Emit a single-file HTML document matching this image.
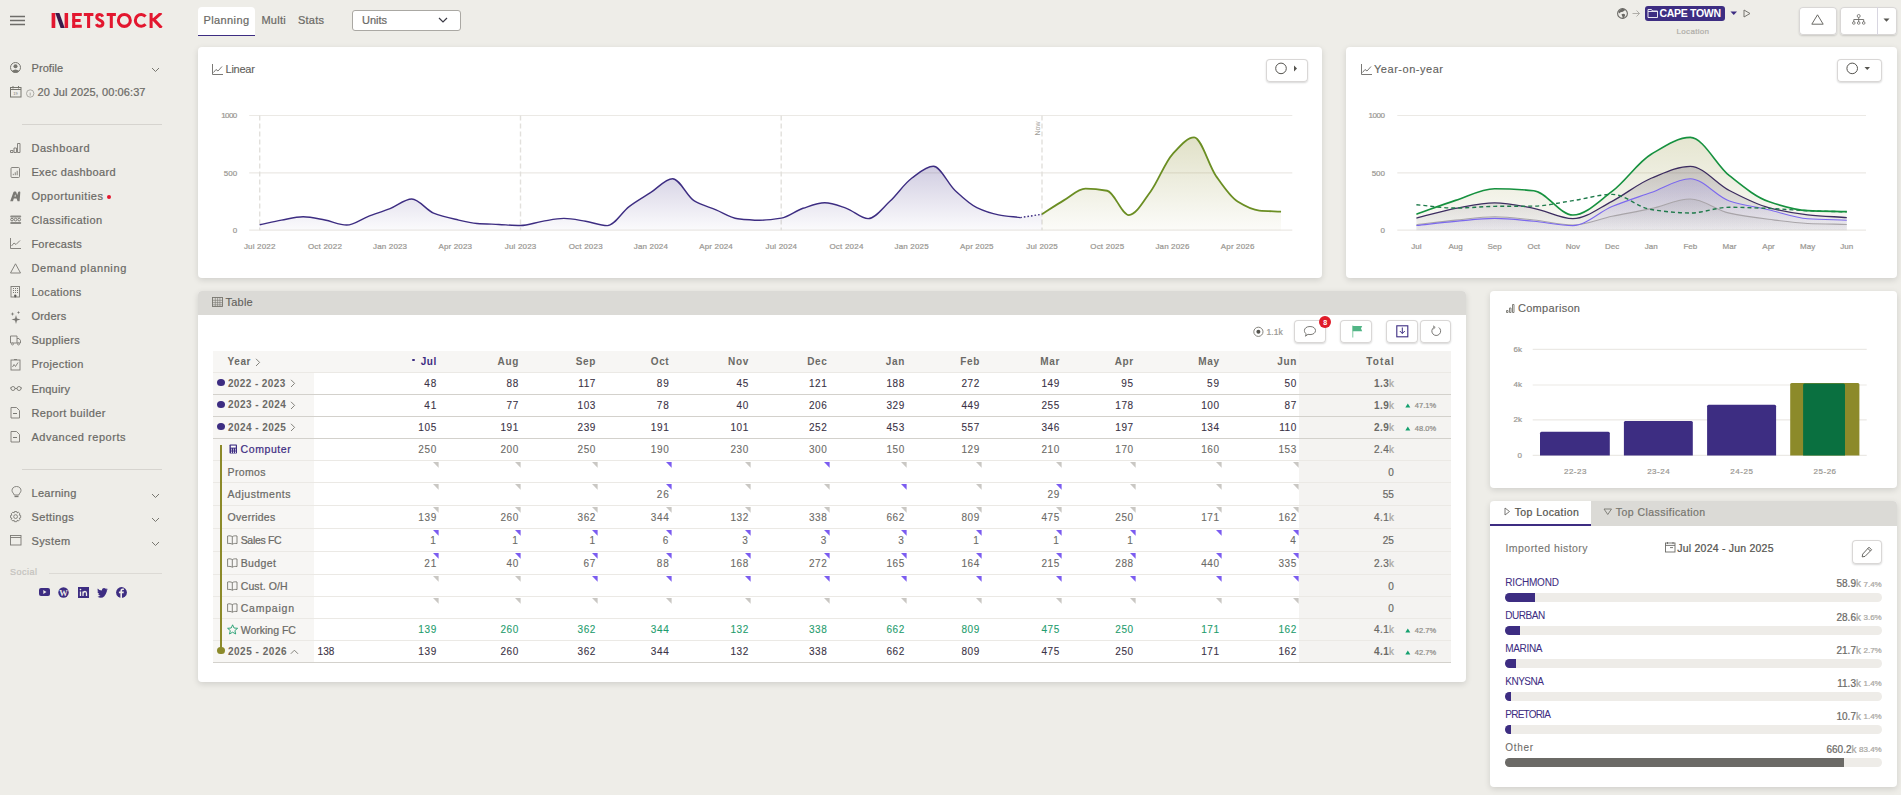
<!DOCTYPE html>
<html><head><meta charset="utf-8"><style>
html,body{margin:0;padding:0;}
body{width:1901px;height:795px;overflow:hidden;background:#eeede8;position:relative;font-family:"Liberation Sans",sans-serif;}
.t{position:absolute;white-space:nowrap;line-height:1;}
.r{position:absolute;}
.i{position:absolute;overflow:visible;}
.card{position:absolute;background:#fff;border-radius:4px;box-shadow:0 2px 6px rgba(0,0,0,0.13);}
.btn{background:#fff;border-radius:4px;box-shadow:inset 0 0 0 1px #d9d7d6,0 1px 2px rgba(0,0,0,0.16);}
</style></head><body>
<svg class="i" style="left:10px;top:14px;" width="16" height="12" viewBox="0 0 16 12"><path d="M0 2.5H15M0 6.5H15M0 10.5H15" stroke="#6e6d69" stroke-width="1.3"/></svg><svg class="i" style="left:0;top:0" width="170" height="35" viewBox="0 0 170 35"><defs><clipPath id="lc"><rect x="0" y="12.9" width="170" height="15"/></clipPath></defs><path clip-path="url(#lc)" d="M73.75 12.9V27.9 M72.1 14.55H81.8 M72.1 20.4H80.6 M72.1 26.25H81.8 M83.8 14.55H93.4 M88.6 14.55V27.9 M106.7 14.55H115.9 M111.3 14.55V27.9 M151.1 12.9V27.9 M161.3 12.9 L152.6 20.6 M153.6 19.4 L161.5 27.9" stroke="#e3172f" stroke-width="3.05" fill="none"/><path d="M102.8 16.6 C102.1 15.3 101.1 14.55 99.8 14.55 C97.9 14.55 96.8 15.7 96.8 17.2 C96.8 20.4 102.9 19.8 102.9 23.3 C102.9 25.1 101.5 26.25 99.7 26.25 C98.1 26.25 96.9 25.4 96.3 24.1" stroke="#e3172f" stroke-width="3.05" fill="none"/><circle cx="124.35" cy="20.4" r="5.97" stroke="#e3172f" stroke-width="3.05" fill="none"/><path d="M145.55 16.49 A5.85 5.85 0 1 0 145.55 24.31" stroke="#e3172f" stroke-width="3.05" fill="none"/><path d="M51.6 12.9H55.3V27.9H51.6Z M64.6 12.9H68.1V27.9H64.6Z" fill="#e3172f"/><path d="M55.3 12.9 L59.4 12.9 L64.7 27.9 L60.6 27.9Z" fill="#3b1a4a"/></svg><svg class="i" style="left:10px;top:62px;" width="12" height="12" viewBox="0 0 12 12"><circle cx="5.5" cy="5.5" r="5" fill="none" stroke="#77766f" stroke-width="1"/><circle cx="5.5" cy="4.2" r="2" fill="#77766f"/><path d="M1.8 9 Q5.5 5.8 9.2 9 L8 10.3 Q5.5 11 3 10.3Z" fill="#77766f"/></svg><div class="t" style="left:31.50px;top:62.89px;font-size:11px;color:#6b6a66;letter-spacing:0.070px;-webkit-text-stroke-width:0.22px;">Profile</div><svg class="i" style="left:151px;top:67px;" width="9" height="6" viewBox="0 0 9 6"><path d="M1 1 L4.5 4.5 L8 1" fill="none" stroke="#77766f" stroke-width="1"/></svg><svg class="i" style="left:10px;top:86px;" width="12" height="12" viewBox="0 0 12 12"><rect x="0.5" y="1.5" width="10.5" height="9.5" fill="none" stroke="#77766f" stroke-width="1"/><path d="M0.5 3.5H11M3 0V2.5M8.5 0V2.5" stroke="#77766f" stroke-width="1"/><text x="3.2" y="8.8" font-size="4" fill="#77766f" font-family="Liberation Sans">19</text></svg><svg class="i" style="left:26px;top:89px;" width="9" height="9" viewBox="0 0 9 9"><circle cx="4.2" cy="4.5" r="3.7" fill="none" stroke="#9a9994" stroke-width="0.8"/><path d="M4.2 3.6V6.6" stroke="#9a9994" stroke-width="0.8"/></svg><div class="t" style="left:37.60px;top:86.69px;font-size:11px;color:#6b6a66;letter-spacing:0.104px;-webkit-text-stroke-width:0.22px;">20 Jul 2025, 00:06:37</div><div class="r" style="left:22px;top:123.5px;width:140px;height:1px;background:#d6d4cf"></div><div class="t" style="left:31.40px;top:142.99px;font-size:11px;color:#6b6a66;letter-spacing:0.548px;-webkit-text-stroke-width:0.22px;">Dashboard</div><svg class="i" style="left:10px;top:142.6px;" width="13" height="13" viewBox="0 0 13 13"><path d="M0.5 9.5H3V7.5H0.5ZM4 9.5H6.5V5H4ZM7.5 9.5H10V0.5H7.5Z" fill="none" stroke="#7a7974" stroke-width="0.9"/></svg><div class="t" style="left:31.40px;top:166.99px;font-size:11px;color:#6b6a66;letter-spacing:0.362px;-webkit-text-stroke-width:0.22px;">Exec dashboard</div><svg class="i" style="left:10px;top:166.6px;" width="13" height="13" viewBox="0 0 13 13"><rect x="1" y="0.5" width="8.5" height="10" rx="1" fill="none" stroke="#7a7974" stroke-width="0.9"/><path d="M3.3 8.2V6.8M5.25 8.2V5.3M7.2 8.2V3.8" stroke="#7a7974" stroke-width="0.9"/></svg><div class="t" style="left:31.40px;top:191.19px;font-size:11px;color:#6b6a66;letter-spacing:0.514px;-webkit-text-stroke-width:0.22px;">Opportunities</div><svg class="i" style="left:10px;top:190.8px;" width="13" height="13" viewBox="0 0 13 13"><path d="M0.2 10.2 L3.4 1.2 Q3.7 0.6 4.4 0.6 H5.4 Q6.1 0.6 6.3 1.2 L7.2 4 L8.2 1 Q8.4 0.6 9 0.6 H9.6 Q10.4 0.6 10.3 1.4 L9.6 10.2 H7.6 L6.6 7.6 H3.8 L3 10.2Z M4.4 5.6 H6 L5.2 3.2Z" fill="#7a7974" fill-rule="evenodd"/></svg><div class="t" style="left:31.40px;top:214.89px;font-size:11px;color:#6b6a66;letter-spacing:0.461px;-webkit-text-stroke-width:0.22px;">Classification</div><svg class="i" style="left:10px;top:214.5px;" width="13" height="13" viewBox="0 0 13 13"><rect x="0.2" y="0.4" width="11" height="2" rx="0.9" fill="#7a7974" opacity="0.85"/><circle cx="2" cy="4.6" r="1.35" fill="none" stroke="#7a7974" stroke-width="1"/><circle cx="5.6" cy="4.6" r="1.35" fill="none" stroke="#7a7974" stroke-width="1"/><circle cx="9.2" cy="4.6" r="1.35" fill="none" stroke="#7a7974" stroke-width="1"/><rect x="0.2" y="7" width="11" height="2" rx="0.9" fill="#7a7974" opacity="0.85"/></svg><div class="t" style="left:31.40px;top:238.59px;font-size:11px;color:#6b6a66;letter-spacing:0.251px;-webkit-text-stroke-width:0.22px;">Forecasts</div><svg class="i" style="left:10px;top:238.2px;" width="13" height="13" viewBox="0 0 13 13"><path d="M0.5 0V10.5H11M1.5 8 L4 5 L6 6.5 L10 2.5" fill="none" stroke="#7a7974" stroke-width="0.9"/></svg><div class="t" style="left:31.40px;top:263.09px;font-size:11px;color:#6b6a66;letter-spacing:0.619px;-webkit-text-stroke-width:0.22px;">Demand planning</div><svg class="i" style="left:10px;top:262.7px;" width="13" height="13" viewBox="0 0 13 13"><path d="M5.5 0.8 L10.5 10 H0.5Z" fill="none" stroke="#7a7974" stroke-width="0.9"/></svg><div class="t" style="left:31.40px;top:286.79px;font-size:11px;color:#6b6a66;letter-spacing:0.339px;-webkit-text-stroke-width:0.22px;">Locations</div><svg class="i" style="left:10px;top:286.4px;" width="13" height="13" viewBox="0 0 13 13"><rect x="1" y="0.5" width="8.5" height="10.5" fill="none" stroke="#7a7974" stroke-width="0.9"/><path d="M3 2.5H4M5 2.5H6M7 2.5H8M3 4.5H4M5 4.5H6M7 4.5H8M3 6.5H4M5 6.5H6M7 6.5H8M4.5 9V11H6V9Z" stroke="#7a7974" stroke-width="1"/></svg><div class="t" style="left:31.40px;top:310.89px;font-size:11px;color:#6b6a66;letter-spacing:0.236px;-webkit-text-stroke-width:0.22px;">Orders</div><svg class="i" style="left:10px;top:310.5px;" width="13" height="13" viewBox="0 0 13 13"><path d="M6 4 L7 7.5 L10.5 8.5 L7 9.5 L6 13 L5 9.5 L1.5 8.5 L5 7.5Z M2.5 1 L3 2.5 L4.5 3 L3 3.5 L2.5 5 L2 3.5 L0.5 3 L2 2.5Z M8.5 0 L9 1 L10 1.5 L9 2 L8.5 3 L8 2 L7 1.5 L8 1Z" fill="#7a7974"/></svg><div class="t" style="left:31.40px;top:335.49px;font-size:11px;color:#6b6a66;letter-spacing:0.317px;-webkit-text-stroke-width:0.22px;">Suppliers</div><svg class="i" style="left:10px;top:335.1px;" width="13" height="13" viewBox="0 0 13 13"><path d="M0.5 1H7V8H0.5Z M7 3.5H9 L10.5 5.5 V8H7" fill="none" stroke="#7a7974" stroke-width="0.9"/><circle cx="2.5" cy="9" r="1" fill="#eeece8" stroke="#7a7974" stroke-width="0.8"/><circle cx="8.5" cy="9" r="1" fill="#eeece8" stroke="#7a7974" stroke-width="0.8"/></svg><div class="t" style="left:31.40px;top:359.49px;font-size:11px;color:#6b6a66;letter-spacing:0.343px;-webkit-text-stroke-width:0.22px;">Projection</div><svg class="i" style="left:10px;top:359.1px;" width="13" height="13" viewBox="0 0 13 13"><rect x="1" y="1" width="9" height="10" fill="none" stroke="#7a7974" stroke-width="0.9"/><path d="M2.5 8 L4 5.5 L5.5 7.5 L8 3.5M4 0.5H7" fill="none" stroke="#7a7974" stroke-width="0.9"/></svg><div class="t" style="left:31.40px;top:383.59px;font-size:11px;color:#6b6a66;letter-spacing:0.217px;-webkit-text-stroke-width:0.22px;">Enquiry</div><svg class="i" style="left:10px;top:383.2px;" width="13" height="13" viewBox="0 0 13 13"><circle cx="3" cy="5.5" r="2" fill="none" stroke="#7a7974" stroke-width="0.9"/><circle cx="9" cy="5.5" r="2" fill="none" stroke="#7a7974" stroke-width="0.9"/><path d="M5 5.5H7M0 5H1M11 5H12" stroke="#7a7974" stroke-width="0.9"/></svg><div class="t" style="left:31.40px;top:407.59px;font-size:11px;color:#6b6a66;letter-spacing:0.377px;-webkit-text-stroke-width:0.22px;">Report builder</div><svg class="i" style="left:10px;top:407.2px;" width="13" height="13" viewBox="0 0 13 13"><path d="M1 0.5H6.5 L9.5 3.5 V11H1Z" fill="none" stroke="#7a7974" stroke-width="0.9"/><path d="M3 6.5H7" stroke="#7a7974" stroke-width="1"/></svg><div class="t" style="left:31.40px;top:431.59px;font-size:11px;color:#6b6a66;letter-spacing:0.525px;-webkit-text-stroke-width:0.22px;">Advanced reports</div><svg class="i" style="left:10px;top:431.2px;" width="13" height="13" viewBox="0 0 13 13"><path d="M1 0.5H6.5 L9.5 3.5 V11H1Z" fill="none" stroke="#7a7974" stroke-width="0.9"/><path d="M3 6.5H7" stroke="#7a7974" stroke-width="1"/></svg><div class="r" style="left:107px;top:195px;width:4px;height:4px;border-radius:50%;background:#e3172f"></div><div class="r" style="left:22px;top:469px;width:140px;height:1px;background:#d6d4cf"></div><div class="t" style="left:31.50px;top:488.19px;font-size:11px;color:#6b6a66;letter-spacing:0.284px;-webkit-text-stroke-width:0.22px;">Learning</div><svg class="i" style="left:151px;top:492.5px;" width="9" height="6" viewBox="0 0 9 6"><path d="M1 1 L4.5 4.5 L8 1" fill="none" stroke="#77766f" stroke-width="1"/></svg><div class="t" style="left:31.50px;top:512.39px;font-size:11px;color:#6b6a66;letter-spacing:0.350px;-webkit-text-stroke-width:0.22px;">Settings</div><svg class="i" style="left:151px;top:516.7px;" width="9" height="6" viewBox="0 0 9 6"><path d="M1 1 L4.5 4.5 L8 1" fill="none" stroke="#77766f" stroke-width="1"/></svg><div class="t" style="left:31.50px;top:536.39px;font-size:11px;color:#6b6a66;letter-spacing:0.385px;-webkit-text-stroke-width:0.22px;">System</div><svg class="i" style="left:151px;top:540.7px;" width="9" height="6" viewBox="0 0 9 6"><path d="M1 1 L4.5 4.5 L8 1" fill="none" stroke="#77766f" stroke-width="1"/></svg><svg class="i" style="left:11px;top:486px;" width="11" height="12" viewBox="0 0 11 12"><path d="M5.5 0.5 C2.5 0.5 1 2.5 1 4.5 C1 6.5 3 7.5 3.2 9 H7.8 C8 7.5 10 6.5 10 4.5 C10 2.5 8.5 0.5 5.5 0.5Z" fill="none" stroke="#7a7974" stroke-width="0.9"/><path d="M3.5 10.5H7.5" stroke="#7a7974" stroke-width="1.3"/></svg><svg class="i" style="left:10px;top:511px;" width="12" height="12" viewBox="0 0 12 12"><path d="M9.25 3.97 L10.67 4.47 L10.67 6.73 L9.25 7.23 L9.34 7.03 L9.99 8.39 L8.39 9.99 L7.03 9.34 L7.23 9.25 L6.73 10.67 L4.47 10.67 L3.97 9.25 L4.17 9.34 L2.81 9.99 L1.21 8.39 L1.86 7.03 L1.95 7.23 L0.53 6.73 L0.53 4.47 L1.95 3.97 L1.86 4.17 L1.21 2.81 L2.81 1.21 L4.17 1.86 L3.97 1.95 L4.47 0.53 L6.73 0.53 L7.23 1.95 L7.03 1.86 L8.39 1.21 L9.99 2.81 L9.34 4.17Z" fill="none" stroke="#7a7974" stroke-width="0.9" stroke-linejoin="round"/><circle cx="5.6" cy="5.6" r="1.9" fill="none" stroke="#7a7974" stroke-width="0.9"/></svg><svg class="i" style="left:10px;top:535px;" width="12" height="11" viewBox="0 0 12 11"><rect x="0.5" y="0.5" width="10.5" height="9.5" fill="none" stroke="#7a7974" stroke-width="0.9"/><path d="M0.5 2.5H11" stroke="#7a7974" stroke-width="0.9"/></svg><div class="t" style="left:10.00px;top:568.18px;font-size:9px;color:#c4c2bd;letter-spacing:0.497px;-webkit-text-stroke-width:0.22px;">Social</div><div class="r" style="left:49px;top:573px;width:113px;height:1px;background:#dcdad5"></div><svg class="i" style="left:39px;top:587px;" width="11" height="10" viewBox="0 0 11 10"><rect x="0" y="1" width="11" height="8" rx="2" fill="#3d2d82"/><path d="M4.3 3 L7.5 5 L4.3 7Z" fill="#eeece8"/></svg><svg class="i" style="left:58px;top:587px;" width="11" height="11" viewBox="0 0 11 11"><circle cx="5.5" cy="5.5" r="5.2" fill="#3d2d82"/><text x="5.5" y="8.6" text-anchor="middle" font-size="8.5" font-weight="bold" fill="#eeece8" font-family="Liberation Serif">W</text></svg><svg class="i" style="left:77.5px;top:587px;" width="11" height="11" viewBox="0 0 11 11"><rect x="0" y="0" width="11" height="11" fill="#3d2d82"/><path d="M2.5 4.5V9M5 4.5V9M5 6.5 Q5.5 4.5 7 4.5 Q8.5 4.5 8.5 6.5V9" fill="none" stroke="#eeece8" stroke-width="1.3"/><circle cx="2.5" cy="2.6" r="0.8" fill="#eeece8"/></svg><svg class="i" style="left:97px;top:588px;" width="11" height="10" viewBox="0 0 11 10"><path d="M10.8 1.2 Q10 1.6 9.3 1.6 Q10.1 1 10.4 0.2 Q9.6 0.7 8.8 0.8 Q8 0 6.9 0 Q4.8 0.2 4.8 2.6 Q2 2.4 0.7 0.6 Q-0.1 2.4 1.4 3.6 Q0.9 3.6 0.4 3.4 Q0.5 5.3 2.3 5.8 Q1.8 6 1.2 5.9 Q1.8 7.4 3.5 7.5 Q2 8.8 0 8.6 Q7 12.5 9.8 3.5 Q9.9 2.9 9.8 2.6 Q10.5 2 10.8 1.2Z" fill="#3d2d82"/></svg><svg class="i" style="left:116px;top:587px;" width="11" height="11" viewBox="0 0 11 11"><circle cx="5.5" cy="5.5" r="5.4" fill="#3d2d82"/><path d="M6 11 V6.3 H7.6 L7.8 4.6 H6 V3.7 Q6 3 6.8 3 H7.9 V1.5 Q7.2 1.4 6.5 1.4 Q4.4 1.4 4.4 3.5 V4.6 H2.9 V6.3 H4.4 V11Z" fill="#eeece8"/></svg><div class="r" style="left:198px;top:7px;width:57px;height:28px;background:#fff;border-radius:4px 4px 0 0"></div><div class="r" style="left:198px;top:34.5px;width:57px;height:1.6px;background:#3d2d82"></div><div class="t" style="left:203.50px;top:14.99px;font-size:11px;color:#6b6a66;letter-spacing:0.384px;-webkit-text-stroke-width:0.22px;">Planning</div><div class="t" style="left:261.40px;top:14.99px;font-size:11px;color:#6b6a66;letter-spacing:0.269px;-webkit-text-stroke-width:0.22px;">Multi</div><div class="t" style="left:298.00px;top:14.99px;font-size:11px;color:#6b6a66;letter-spacing:0.233px;-webkit-text-stroke-width:0.22px;">Stats</div><div class="r" style="left:352.4px;top:10.3px;width:109px;height:21.1px;background:#fff;border:1px solid #aaa8a3;border-radius:3px;box-sizing:border-box"></div><div class="t" style="left:362.00px;top:14.99px;font-size:11px;color:#6b6a66;letter-spacing:-0.015px;-webkit-text-stroke-width:0.22px;">Units</div><svg class="i" style="left:438px;top:17px;" width="10" height="7" viewBox="0 0 10 7"><path d="M1 1 L5 5 L9 1" fill="none" stroke="#3b3a45" stroke-width="1.2"/></svg><svg class="i" style="left:1616.8px;top:7.8px;" width="12" height="12" viewBox="0 0 12 12"><circle cx="5.5" cy="5.5" r="4.9" fill="none" stroke="#6b6a66" stroke-width="1.1"/><path d="M1.3 4 Q2.2 1.6 4.5 0.9 Q7 0.6 8.6 1.9 Q7.4 2.4 6.8 3 Q6 4.2 4.3 4 Q3 4.3 2.4 5.4Z M4.6 6.3 Q6.3 5.2 7.8 6.2 Q8.6 7.2 7.6 8.4 Q6.8 9.2 6.4 10.4 L5.6 10.3 Q5.9 8.8 5.1 7.9 Q4.5 7.2 4.6 6.3Z" fill="#6b6a66"/></svg><svg class="i" style="left:1632px;top:9px;" width="9" height="9" viewBox="0 0 9 9"><path d="M0.5 4.5H7.5M4.5 1.5 L7.5 4.5 L4.5 7.5" fill="none" stroke="#a8a7a2" stroke-width="0.9"/></svg><div class="r" style="left:1645px;top:6px;width:79.5px;height:15px;background:#3d2d82;border-radius:3px"></div><svg class="i" style="left:1647px;top:8px;" width="12" height="11" viewBox="0 0 12 11"><path d="M1 1.5H4.5L5.5 3H10.5V9.5H1Z M1 3.5 H10.5" fill="none" stroke="#e8e6f0" stroke-width="1"/></svg><div class="t" style="left:1659.50px;top:8.01px;font-size:10.5px;color:#ffffff;letter-spacing:-0.309px;font-weight:bold;">CAPE TOWN</div><svg class="i" style="left:1730px;top:11px;" width="8" height="5" viewBox="0 0 8 5"><path d="M0.5 0.5H7L3.75 4Z" fill="#3d2d82"/></svg><svg class="i" style="left:1743px;top:9px;" width="8" height="9" viewBox="0 0 8 9"><path d="M1 1 L7 4.5 L1 8Z" fill="none" stroke="#76756f" stroke-width="1"/></svg><div class="t" style="left:1676.60px;top:27.63px;font-size:8px;color:#b0aea9;letter-spacing:0.308px;-webkit-text-stroke-width:0.22px;">Location</div><div class="r btn" style="left:1799px;top:6.5px;width:38px;height:28.5px;"></div><svg class="i" style="left:1811px;top:14px;" width="14" height="11" viewBox="0 0 14 11"><path d="M6.5 0.8 L12.2 10.2 H0.8Z" fill="none" stroke="#6b6a66" stroke-width="1"/></svg><div class="r btn" style="left:1840px;top:6.5px;width:57px;height:28.5px;"></div><div class="r" style="left:1877px;top:6.5px;width:1px;height:28.5px;background:#d8d6e0"></div><svg class="i" style="left:1852px;top:14px;" width="14" height="12" viewBox="0 0 14 12"><circle cx="6.7" cy="2" r="1.5" fill="none" stroke="#6b6a66" stroke-width="0.8"/><path d="M1.8 5.5H11.7M6.7 3.5V5.5M1.8 5.5V8M6.7 5.5V8M11.7 5.5V8" stroke="#6b6a66" stroke-width="0.9"/><circle cx="1.8" cy="9" r="1.3" fill="none" stroke="#6b6a66" stroke-width="0.8"/><circle cx="6.7" cy="9" r="1.3" fill="none" stroke="#6b6a66" stroke-width="0.8"/><circle cx="11.7" cy="9" r="1.3" fill="none" stroke="#6b6a66" stroke-width="0.8"/></svg><svg class="i" style="left:1883px;top:18px;" width="8" height="5" viewBox="0 0 8 5"><path d="M0.5 0.5H6.5L3.5 3.8Z" fill="#55544f"/></svg><div class="card" style="left:198px;top:47px;width:1124px;height:231px"></div><svg class="i" style="left:212px;top:64px;" width="11" height="11" viewBox="0 0 11 11"><path d="M0.5 0V10.5H11M1.5 8.5 L4 5.5 L6 7 L10 2.5" fill="none" stroke="#6b6a66" stroke-width="0.9"/></svg><div class="t" style="left:225.60px;top:63.79px;font-size:11px;color:#62615c;letter-spacing:-0.276px;-webkit-text-stroke-width:0.12px;">Linear</div><div class="r btn" style="left:1265.5px;top:58.5px;width:42px;height:23px"></div><svg class="i" style="left:1274px;top:62px;" width="26" height="14" viewBox="0 0 26 14"><circle cx="7" cy="6.4" r="5.3" fill="none" stroke="#55544f" stroke-width="1"/><path d="M20 3.5 L23 6.5 L20 9.5Z" fill="#55544f"/></svg><div class="t" style="left:221.20px;top:112.23px;font-size:8px;color:#9a9893;letter-spacing:-0.599px;-webkit-text-stroke-width:0.22px;">1000</div><div class="t" style="left:223.85px;top:169.58px;font-size:8px;color:#9a9893;-webkit-text-stroke-width:0.22px;">500</div><div class="t" style="left:232.75px;top:226.93px;font-size:8px;color:#9a9893;-webkit-text-stroke-width:0.22px;">0</div><svg class="i" style="left:0;top:0" width="1330" height="280" viewBox="0 0 1330 280"><defs><linearGradient id="gp" x1="0" y1="0" x2="0" y2="1"><stop offset="0" stop-color="#3d2d82" stop-opacity="0.24"/><stop offset="1" stop-color="#3d2d82" stop-opacity="0.02"/></linearGradient><linearGradient id="gc" gradientUnits="userSpaceOnUse" x1="0" y1="166" x2="0" y2="230"><stop offset="0" stop-color="#3d2d82" stop-opacity="0.24"/><stop offset="1" stop-color="#3d2d82" stop-opacity="0.02"/></linearGradient><linearGradient id="gg" x1="0" y1="0" x2="0" y2="1"><stop offset="0" stop-color="#8a8a2a" stop-opacity="0.26"/><stop offset="1" stop-color="#8a8a2a" stop-opacity="0.03"/></linearGradient></defs><path d="M249.2 115.5H1292.3" stroke="#ebe9e5" stroke-width="1.2"/><path d="M249.2 172.8H1292.3" stroke="#ebe9e5" stroke-width="1.2"/><path d="M249.2 230.2H1292.3" stroke="#ebe9e5" stroke-width="1.2"/><path d="M259.7 115.5V230.2" stroke="#e2e0dc" stroke-width="1.4" stroke-dasharray="5 3"/><path d="M520.5 115.5V230.2" stroke="#e2e0dc" stroke-width="1.4" stroke-dasharray="5 3"/><path d="M781.2 115.5V230.2" stroke="#e2e0dc" stroke-width="1.4" stroke-dasharray="5 3"/><path d="M1042.0 115.5V230.2" stroke="#e2e0dc" stroke-width="1.4" stroke-dasharray="5 3"/><path d="M259.70,224.69C266.94,223.17 274.19,221.39 281.43,220.11C288.67,218.82 295.92,216.78 303.16,216.78C310.40,216.78 317.65,218.68 324.89,219.99C332.14,221.30 339.38,225.04 346.62,225.04C353.87,225.04 361.11,219.04 368.35,216.32C375.60,213.60 382.84,211.49 390.08,208.64C397.33,205.79 404.57,199.00 411.81,199.00C419.06,199.00 426.30,210.24 433.54,213.11C440.79,215.98 448.03,217.65 455.27,219.30C462.52,220.96 469.76,222.88 477.01,223.43C484.25,223.98 491.49,224.12 498.74,224.46C505.98,224.81 513.22,225.50 520.47,225.50C527.71,225.50 534.95,222.52 542.20,221.37C549.44,220.21 556.68,218.39 563.93,218.39C571.17,218.39 578.41,220.10 585.66,221.25C592.90,222.41 600.15,225.61 607.39,225.61C614.63,225.61 621.88,211.97 629.12,206.57C636.36,201.17 643.61,197.11 650.85,192.46C658.09,187.82 665.34,178.70 672.58,178.70C679.82,178.70 687.07,196.74 694.31,200.95C701.55,205.17 708.80,206.82 716.04,209.78C723.29,212.75 730.53,217.88 737.77,218.73C745.02,219.58 752.26,220.22 759.50,220.22C766.75,220.22 773.99,219.29 781.23,218.16C788.48,217.02 795.72,210.65 802.96,208.29C810.21,205.94 817.45,202.79 824.69,202.79C831.94,202.79 839.18,205.90 846.42,208.29C853.67,210.69 860.91,218.62 868.16,218.62C875.40,218.62 882.64,207.89 889.89,201.30C897.13,194.70 904.37,183.48 911.62,178.24C918.86,173.00 926.10,166.31 933.35,166.31C940.59,166.31 947.83,183.84 955.08,190.51C962.32,197.19 969.56,204.22 976.81,207.60C984.05,210.99 991.30,213.50 998.54,214.83C1005.78,216.16 1013.03,216.67 1020.27,217.58L1020.27,230.2L259.70,230.2Z" fill="url(#gp)"/><path d="M1020.27,217.58L1042.00,214.26L1042.00,230.2L1020.27,230.2Z" fill="url(#gc)"/><path d="M1042.00,214.26C1049.24,209.63 1056.49,204.61 1063.73,200.38C1070.97,196.15 1078.22,188.68 1085.46,188.68C1092.70,188.68 1099.95,189.47 1107.19,190.74C1114.44,192.01 1121.68,215.06 1128.92,215.06C1136.17,215.06 1143.41,201.06 1150.65,191.43C1157.90,181.80 1165.14,162.00 1172.38,154.27C1179.63,146.54 1186.87,137.41 1194.11,137.41C1201.36,137.41 1208.60,165.44 1215.84,175.72C1223.09,186.00 1230.33,197.05 1237.58,201.52C1244.82,206.00 1252.06,209.97 1259.31,210.59C1266.55,211.20 1273.79,211.27 1281.04,211.62L1281.04,230.2L1042.00,230.2Z" fill="url(#gg)"/><path d="M259.70,224.69C266.94,223.17 274.19,221.39 281.43,220.11C288.67,218.82 295.92,216.78 303.16,216.78C310.40,216.78 317.65,218.68 324.89,219.99C332.14,221.30 339.38,225.04 346.62,225.04C353.87,225.04 361.11,219.04 368.35,216.32C375.60,213.60 382.84,211.49 390.08,208.64C397.33,205.79 404.57,199.00 411.81,199.00C419.06,199.00 426.30,210.24 433.54,213.11C440.79,215.98 448.03,217.65 455.27,219.30C462.52,220.96 469.76,222.88 477.01,223.43C484.25,223.98 491.49,224.12 498.74,224.46C505.98,224.81 513.22,225.50 520.47,225.50C527.71,225.50 534.95,222.52 542.20,221.37C549.44,220.21 556.68,218.39 563.93,218.39C571.17,218.39 578.41,220.10 585.66,221.25C592.90,222.41 600.15,225.61 607.39,225.61C614.63,225.61 621.88,211.97 629.12,206.57C636.36,201.17 643.61,197.11 650.85,192.46C658.09,187.82 665.34,178.70 672.58,178.70C679.82,178.70 687.07,196.74 694.31,200.95C701.55,205.17 708.80,206.82 716.04,209.78C723.29,212.75 730.53,217.88 737.77,218.73C745.02,219.58 752.26,220.22 759.50,220.22C766.75,220.22 773.99,219.29 781.23,218.16C788.48,217.02 795.72,210.65 802.96,208.29C810.21,205.94 817.45,202.79 824.69,202.79C831.94,202.79 839.18,205.90 846.42,208.29C853.67,210.69 860.91,218.62 868.16,218.62C875.40,218.62 882.64,207.89 889.89,201.30C897.13,194.70 904.37,183.48 911.62,178.24C918.86,173.00 926.10,166.31 933.35,166.31C940.59,166.31 947.83,183.84 955.08,190.51C962.32,197.19 969.56,204.22 976.81,207.60C984.05,210.99 991.30,213.50 998.54,214.83C1005.78,216.16 1013.03,216.67 1020.27,217.58" fill="none" stroke="#3d2d82" stroke-width="1.4"/><path d="M1020.27,217.58L1042.00,214.26" fill="none" stroke="#3d2d82" stroke-width="1.4" stroke-dasharray="1.6 2"/><path d="M1042.00,214.26C1049.24,209.63 1056.49,204.61 1063.73,200.38C1070.97,196.15 1078.22,188.68 1085.46,188.68C1092.70,188.68 1099.95,189.47 1107.19,190.74C1114.44,192.01 1121.68,215.06 1128.92,215.06C1136.17,215.06 1143.41,201.06 1150.65,191.43C1157.90,181.80 1165.14,162.00 1172.38,154.27C1179.63,146.54 1186.87,137.41 1194.11,137.41C1201.36,137.41 1208.60,165.44 1215.84,175.72C1223.09,186.00 1230.33,197.05 1237.58,201.52C1244.82,206.00 1252.06,209.97 1259.31,210.59C1266.55,211.20 1273.79,211.27 1281.04,211.62" fill="none" stroke="#6b8e23" stroke-width="1.8"/></svg><div class="t" style="left:1030px;top:125px;font-size:7px;color:#9f9d98;transform:rotate(-90deg);transform-origin:center;">Now</div><div class="t" style="left:243.95px;top:242.63px;font-size:8px;color:#9a9893;letter-spacing:0.179px;-webkit-text-stroke-width:0.22px;">Jul 2022</div><div class="t" style="left:307.89px;top:242.63px;font-size:8px;color:#9a9893;letter-spacing:0.219px;-webkit-text-stroke-width:0.22px;">Oct 2022</div><div class="t" style="left:373.08px;top:242.63px;font-size:8px;color:#9a9893;letter-spacing:0.154px;-webkit-text-stroke-width:0.22px;">Jan 2023</div><div class="t" style="left:438.52px;top:242.63px;font-size:8px;color:#9a9893;letter-spacing:0.147px;-webkit-text-stroke-width:0.22px;">Apr 2023</div><div class="t" style="left:504.72px;top:242.63px;font-size:8px;color:#9a9893;letter-spacing:0.179px;-webkit-text-stroke-width:0.22px;">Jul 2023</div><div class="t" style="left:568.66px;top:242.63px;font-size:8px;color:#9a9893;letter-spacing:0.219px;-webkit-text-stroke-width:0.22px;">Oct 2023</div><div class="t" style="left:633.85px;top:242.63px;font-size:8px;color:#9a9893;letter-spacing:0.154px;-webkit-text-stroke-width:0.22px;">Jan 2024</div><div class="t" style="left:699.29px;top:242.63px;font-size:8px;color:#9a9893;letter-spacing:0.147px;-webkit-text-stroke-width:0.22px;">Apr 2024</div><div class="t" style="left:765.48px;top:242.63px;font-size:8px;color:#9a9893;letter-spacing:0.179px;-webkit-text-stroke-width:0.22px;">Jul 2024</div><div class="t" style="left:829.42px;top:242.63px;font-size:8px;color:#9a9893;letter-spacing:0.219px;-webkit-text-stroke-width:0.22px;">Oct 2024</div><div class="t" style="left:894.62px;top:242.63px;font-size:8px;color:#9a9893;letter-spacing:0.154px;-webkit-text-stroke-width:0.22px;">Jan 2025</div><div class="t" style="left:960.06px;top:242.63px;font-size:8px;color:#9a9893;letter-spacing:0.147px;-webkit-text-stroke-width:0.22px;">Apr 2025</div><div class="t" style="left:1026.25px;top:242.63px;font-size:8px;color:#9a9893;letter-spacing:0.179px;-webkit-text-stroke-width:0.22px;">Jul 2025</div><div class="t" style="left:1090.19px;top:242.63px;font-size:8px;color:#9a9893;letter-spacing:0.219px;-webkit-text-stroke-width:0.22px;">Oct 2025</div><div class="t" style="left:1155.38px;top:242.63px;font-size:8px;color:#9a9893;letter-spacing:0.154px;-webkit-text-stroke-width:0.22px;">Jan 2026</div><div class="t" style="left:1220.83px;top:242.63px;font-size:8px;color:#9a9893;letter-spacing:0.147px;-webkit-text-stroke-width:0.22px;">Apr 2026</div><div class="card" style="left:1346px;top:47px;width:551px;height:231px"></div><svg class="i" style="left:1361px;top:64px;" width="11" height="11" viewBox="0 0 11 11"><path d="M0.5 0V10.5H11M1.5 8.5 L4 5.5 L6 7 L10 2.5" fill="none" stroke="#6b6a66" stroke-width="0.9"/></svg><div class="t" style="left:1374.00px;top:63.79px;font-size:11px;color:#62615c;letter-spacing:0.528px;-webkit-text-stroke-width:0.12px;">Year-on-year</div><div class="r btn" style="left:1837px;top:58.5px;width:45px;height:23px"></div><svg class="i" style="left:1845px;top:62px;" width="30" height="14" viewBox="0 0 30 14"><circle cx="7.2" cy="6.4" r="5.3" fill="none" stroke="#55544f" stroke-width="1"/><path d="M19.5 5 H25 L22.25 8Z" fill="#55544f"/></svg><div class="t" style="left:1368.50px;top:112.23px;font-size:8px;color:#9a9893;letter-spacing:-0.432px;-webkit-text-stroke-width:0.22px;">1000</div><div class="t" style="left:1371.65px;top:169.58px;font-size:8px;color:#9a9893;-webkit-text-stroke-width:0.22px;">500</div><div class="t" style="left:1380.55px;top:226.93px;font-size:8px;color:#9a9893;-webkit-text-stroke-width:0.22px;">0</div><svg class="i" style="left:0;top:0" width="1901" height="280" viewBox="0 0 1901 280"><defs><linearGradient id="yg" x1="0" y1="0" x2="0" y2="1"><stop offset="0" stop-color="#8a8a2a" stop-opacity="0.22"/><stop offset="1" stop-color="#8a8a2a" stop-opacity="0.04"/></linearGradient><linearGradient id="yd" x1="0" y1="0" x2="0" y2="1"><stop offset="0" stop-color="#3d2d50" stop-opacity="0.22"/><stop offset="1" stop-color="#3d2d50" stop-opacity="0.04"/></linearGradient><linearGradient id="yl" x1="0" y1="0" x2="0" y2="1"><stop offset="0" stop-color="#7b68ee" stop-opacity="0.2"/><stop offset="1" stop-color="#7b68ee" stop-opacity="0.04"/></linearGradient><linearGradient id="yr" x1="0" y1="0" x2="0" y2="1"><stop offset="0" stop-color="#888" stop-opacity="0.18"/><stop offset="1" stop-color="#888" stop-opacity="0.04"/></linearGradient></defs><path d="M1397.3 115.5H1866" stroke="#ebe9e5" stroke-width="1.2"/><path d="M1397.3 172.8H1866" stroke="#ebe9e5" stroke-width="1.2"/><path d="M1397.3 230.2H1866" stroke="#ebe9e5" stroke-width="1.2"/><path d="M1416.40,214.26C1429.44,209.63 1442.48,204.61 1455.53,200.38C1468.57,196.15 1481.61,188.68 1494.65,188.68C1507.70,188.68 1520.74,189.47 1533.78,190.74C1546.82,192.01 1559.87,215.06 1572.91,215.06C1585.95,215.06 1598.99,201.06 1612.04,191.43C1625.08,181.80 1638.12,162.00 1651.16,154.27C1664.21,146.54 1677.25,137.41 1690.29,137.41C1703.33,137.41 1716.38,165.44 1729.42,175.72C1742.46,186.00 1755.50,197.05 1768.55,201.52C1781.59,206.00 1794.63,209.97 1807.67,210.59C1820.72,211.20 1833.76,211.27 1846.80,211.62L1846.80,230.2L1416.40,230.2Z" fill="url(#yg)"/><path d="M1416.40,218.16C1429.44,214.87 1442.48,210.65 1455.53,208.29C1468.57,205.94 1481.61,202.79 1494.65,202.79C1507.70,202.79 1520.74,205.90 1533.78,208.29C1546.82,210.69 1559.87,218.62 1572.91,218.62C1585.95,218.62 1598.99,207.89 1612.04,201.30C1625.08,194.70 1638.12,183.48 1651.16,178.24C1664.21,173.00 1677.25,166.31 1690.29,166.31C1703.33,166.31 1716.38,183.84 1729.42,190.51C1742.46,197.19 1755.50,204.22 1768.55,207.60C1781.59,210.99 1794.63,213.50 1807.67,214.83C1820.72,216.16 1833.76,216.67 1846.80,217.58L1846.80,230.2L1416.40,230.2Z" fill="url(#yd)"/><path d="M1416.40,225.50C1429.44,224.12 1442.48,222.52 1455.53,221.37C1468.57,220.21 1481.61,218.39 1494.65,218.39C1507.70,218.39 1520.74,220.10 1533.78,221.25C1546.82,222.41 1559.87,225.61 1572.91,225.61C1585.95,225.61 1598.99,211.97 1612.04,206.57C1625.08,201.17 1638.12,197.11 1651.16,192.46C1664.21,187.82 1677.25,178.70 1690.29,178.70C1703.33,178.70 1716.38,196.74 1729.42,200.95C1742.46,205.17 1755.50,206.82 1768.55,209.78C1781.59,212.75 1794.63,217.88 1807.67,218.73C1820.72,219.58 1833.76,219.72 1846.80,220.22L1846.80,230.2L1416.40,230.2Z" fill="url(#yl)"/><path d="M1416.40,224.69C1429.44,223.17 1442.48,221.39 1455.53,220.11C1468.57,218.82 1481.61,216.78 1494.65,216.78C1507.70,216.78 1520.74,218.68 1533.78,219.99C1546.82,221.30 1559.87,225.04 1572.91,225.04C1585.95,225.04 1598.99,219.04 1612.04,216.32C1625.08,213.60 1638.12,211.49 1651.16,208.64C1664.21,205.79 1677.25,199.00 1690.29,199.00C1703.33,199.00 1716.38,210.24 1729.42,213.11C1742.46,215.98 1755.50,217.65 1768.55,219.30C1781.59,220.96 1794.63,222.88 1807.67,223.43C1820.72,223.98 1833.76,224.12 1846.80,224.46L1846.80,230.2L1416.40,230.2Z" fill="url(#yr)"/><path d="M1416.40,224.69C1429.44,223.17 1442.48,221.39 1455.53,220.11C1468.57,218.82 1481.61,216.78 1494.65,216.78C1507.70,216.78 1520.74,218.68 1533.78,219.99C1546.82,221.30 1559.87,225.04 1572.91,225.04C1585.95,225.04 1598.99,219.04 1612.04,216.32C1625.08,213.60 1638.12,211.49 1651.16,208.64C1664.21,205.79 1677.25,199.00 1690.29,199.00C1703.33,199.00 1716.38,210.24 1729.42,213.11C1742.46,215.98 1755.50,217.65 1768.55,219.30C1781.59,220.96 1794.63,222.88 1807.67,223.43C1820.72,223.98 1833.76,224.12 1846.80,224.46" fill="none" stroke="#a8a4a8" stroke-width="1.1"/><path d="M1416.40,225.50C1429.44,224.12 1442.48,222.52 1455.53,221.37C1468.57,220.21 1481.61,218.39 1494.65,218.39C1507.70,218.39 1520.74,220.10 1533.78,221.25C1546.82,222.41 1559.87,225.61 1572.91,225.61C1585.95,225.61 1598.99,211.97 1612.04,206.57C1625.08,201.17 1638.12,197.11 1651.16,192.46C1664.21,187.82 1677.25,178.70 1690.29,178.70C1703.33,178.70 1716.38,196.74 1729.42,200.95C1742.46,205.17 1755.50,206.82 1768.55,209.78C1781.59,212.75 1794.63,217.88 1807.67,218.73C1820.72,219.58 1833.76,219.72 1846.80,220.22" fill="none" stroke="#7b68ee" stroke-width="1.1"/><path d="M1416.40,218.16C1429.44,214.87 1442.48,210.65 1455.53,208.29C1468.57,205.94 1481.61,202.79 1494.65,202.79C1507.70,202.79 1520.74,205.90 1533.78,208.29C1546.82,210.69 1559.87,218.62 1572.91,218.62C1585.95,218.62 1598.99,207.89 1612.04,201.30C1625.08,194.70 1638.12,183.48 1651.16,178.24C1664.21,173.00 1677.25,166.31 1690.29,166.31C1703.33,166.31 1716.38,183.84 1729.42,190.51C1742.46,197.19 1755.50,204.22 1768.55,207.60C1781.59,210.99 1794.63,213.50 1807.67,214.83C1820.72,216.16 1833.76,216.67 1846.80,217.58" fill="none" stroke="#3d2d60" stroke-width="1.3"/><path d="M1416.40,204.74C1429.44,205.85 1442.48,208.06 1455.53,208.06C1468.57,208.06 1481.61,206.48 1494.65,206.34C1507.70,206.21 1520.74,206.26 1533.78,206.11C1546.82,205.97 1559.87,202.55 1572.91,200.61C1585.95,198.66 1598.99,194.41 1612.04,194.41C1625.08,194.41 1638.12,207.68 1651.16,209.55C1664.21,211.42 1677.25,213.00 1690.29,213.00C1703.33,213.00 1716.38,207.26 1729.42,207.26C1742.46,207.26 1755.50,207.90 1768.55,208.41C1781.59,208.92 1794.63,210.19 1807.67,210.70C1820.72,211.21 1833.76,211.47 1846.80,211.85" fill="none" stroke="#1e7a4a" stroke-width="1.4" stroke-dasharray="4 3"/><path d="M1416.40,214.26C1429.44,209.63 1442.48,204.61 1455.53,200.38C1468.57,196.15 1481.61,188.68 1494.65,188.68C1507.70,188.68 1520.74,189.47 1533.78,190.74C1546.82,192.01 1559.87,215.06 1572.91,215.06C1585.95,215.06 1598.99,201.06 1612.04,191.43C1625.08,181.80 1638.12,162.00 1651.16,154.27C1664.21,146.54 1677.25,137.41 1690.29,137.41C1703.33,137.41 1716.38,165.44 1729.42,175.72C1742.46,186.00 1755.50,197.05 1768.55,201.52C1781.59,206.00 1794.63,209.97 1807.67,210.59C1820.72,211.20 1833.76,211.27 1846.80,211.62" fill="none" stroke="#16913f" stroke-width="1.6"/></svg><div class="t" style="left:1411.29px;top:242.63px;font-size:8px;color:#9a9893;-webkit-text-stroke-width:0.22px;">Jul</div><div class="t" style="left:1448.41px;top:242.63px;font-size:8px;color:#9a9893;-webkit-text-stroke-width:0.22px;">Aug</div><div class="t" style="left:1487.54px;top:242.63px;font-size:8px;color:#9a9893;-webkit-text-stroke-width:0.22px;">Sep</div><div class="t" style="left:1527.56px;top:242.63px;font-size:8px;color:#9a9893;-webkit-text-stroke-width:0.22px;">Oct</div><div class="t" style="left:1565.80px;top:242.63px;font-size:8px;color:#9a9893;-webkit-text-stroke-width:0.22px;">Nov</div><div class="t" style="left:1604.92px;top:242.63px;font-size:8px;color:#9a9893;-webkit-text-stroke-width:0.22px;">Dec</div><div class="t" style="left:1644.71px;top:242.63px;font-size:8px;color:#9a9893;-webkit-text-stroke-width:0.22px;">Jan</div><div class="t" style="left:1683.40px;top:242.63px;font-size:8px;color:#9a9893;-webkit-text-stroke-width:0.22px;">Feb</div><div class="t" style="left:1722.53px;top:242.63px;font-size:8px;color:#9a9893;-webkit-text-stroke-width:0.22px;">Mar</div><div class="t" style="left:1762.32px;top:242.63px;font-size:8px;color:#9a9893;-webkit-text-stroke-width:0.22px;">Apr</div><div class="t" style="left:1800.12px;top:242.63px;font-size:8px;color:#9a9893;-webkit-text-stroke-width:0.22px;">May</div><div class="t" style="left:1840.35px;top:242.63px;font-size:8px;color:#9a9893;-webkit-text-stroke-width:0.22px;">Jun</div><div class="card" style="left:198px;top:291px;width:1268px;height:391px;overflow:hidden"><div style="position:absolute;left:0;top:0;width:100%;height:23.6px;background:#dbdad6"></div></div><svg class="i" style="left:212px;top:297px;" width="11" height="10" viewBox="0 0 11 10"><rect x="0.5" y="0.5" width="10" height="9" fill="none" stroke="#77766f" stroke-width="0.9"/><path d="M0.5 3.3H10.5M0.5 5.6H10.5M0.5 7.8H10.5M3.3 0.5V9.5M5.6 0.5V9.5M7.9 0.5V9.5" stroke="#77766f" stroke-width="0.6"/></svg><div class="t" style="left:225.40px;top:296.99px;font-size:11px;color:#62615c;letter-spacing:0.251px;-webkit-text-stroke-width:0.12px;">Table</div><svg class="i" style="left:1253px;top:326px;" width="12" height="12" viewBox="0 0 12 12"><circle cx="5.4" cy="5.8" r="4.6" fill="none" stroke="#77766f" stroke-width="0.9"/><circle cx="5.4" cy="5.8" r="2" fill="#55544f"/></svg><div class="t" style="left:1266.60px;top:327.60px;font-size:8.5px;color:#9a9893;-webkit-text-stroke-width:0.22px;">1.1k</div><div class="r btn" style="left:1294.3px;top:320px;width:32.2px;height:23.4px"></div><div class="r btn" style="left:1340.3px;top:320px;width:32.2px;height:23.4px"></div><div class="r btn" style="left:1386.2px;top:320px;width:31.5px;height:23.4px"></div><div class="r btn" style="left:1420.2px;top:320px;width:31.3px;height:23.4px"></div><svg class="i" style="left:1303px;top:325px;" width="14" height="13" viewBox="0 0 14 13"><path d="M7 1.5 C10.5 1.5 12.5 3.3 12.5 5.6 C12.5 7.9 10.3 9.6 7 9.6 C6.3 9.6 5.6 9.5 5 9.3 L2.5 11.2 L3.2 8.8 C2 8.1 1.4 6.9 1.4 5.6 C1.4 3.3 3.5 1.5 7 1.5Z" fill="none" stroke="#6b6a66" stroke-width="0.9"/></svg><div class="r" style="left:1319.2px;top:316.3px;width:11.8px;height:11.8px;border-radius:50%;background:#e01c2a"></div><div class="t" style="left:1323.15px;top:319.17px;font-size:7px;color:#fff;font-weight:bold;">8</div><svg class="i" style="left:1351px;top:325px;" width="13" height="13" viewBox="0 0 13 13"><path d="M1.7 0.5V12.5" stroke="#a5d9bd" stroke-width="1.4"/><path d="M1.7 1 H11.2 L10 3.5 L11.2 6.2 H1.7Z" fill="#52b586"/></svg><svg class="i" style="left:1396px;top:325px;" width="13" height="13" viewBox="0 0 13 13"><rect x="0.8" y="0.8" width="11" height="11" fill="none" stroke="#3d2d82" stroke-width="1.1"/><path d="M6.3 2.5V8.5M3.8 6 L6.3 8.5 L8.8 6" fill="none" stroke="#3d2d82" stroke-width="1"/></svg><svg class="i" style="left:1430px;top:325px;" width="13" height="13" viewBox="0 0 13 13"><path d="M8.8 2.5 A4.4 4.4 0 1 1 4 2.3" fill="none" stroke="#6b6a66" stroke-width="0.9"/><path d="M3 0.8 L5.2 2.4 L3.3 4" fill="none" stroke="#6b6a66" stroke-width="0.9"/></svg><div class="r" style="left:213px;top:351px;width:1238px;height:21.6px;background:#f7f6f4"></div><div class="r" style="left:213px;top:372.6px;width:101px;height:289.7px;background:#f7f6f4"></div><div class="r" style="left:1299.2px;top:351px;width:151.8px;height:311.3px;background:#f4f3f1"></div><div class="r" style="left:213px;top:372.1px;width:1238px;height:1.2px;background:#ebe9e5"></div><div class="r" style="left:213px;top:393.9px;width:1238px;height:1.2px;background:#d3d1cc"></div><div class="r" style="left:213px;top:416.1px;width:1238px;height:1.2px;background:#d3d1cc"></div><div class="r" style="left:213px;top:438.2px;width:1238px;height:1.2px;background:#d3d1cc"></div><div class="r" style="left:213px;top:460.0px;width:1238px;height:1.2px;background:#ebe9e5"></div><div class="r" style="left:213px;top:482.0px;width:1238px;height:1.2px;background:#ebe9e5"></div><div class="r" style="left:213px;top:504.9px;width:1238px;height:1.2px;background:#ebe9e5"></div><div class="r" style="left:213px;top:528.2px;width:1238px;height:1.2px;background:#ebe9e5"></div><div class="r" style="left:213px;top:551.1px;width:1238px;height:1.2px;background:#ebe9e5"></div><div class="r" style="left:213px;top:574.1px;width:1238px;height:1.2px;background:#ebe9e5"></div><div class="r" style="left:213px;top:596.2px;width:1238px;height:1.2px;background:#ebe9e5"></div><div class="r" style="left:213px;top:618.1px;width:1238px;height:1.2px;background:#ebe9e5"></div><div class="r" style="left:213px;top:640.2px;width:1238px;height:1.2px;background:#ebe9e5"></div><div class="r" style="left:213px;top:661.8px;width:1238px;height:1.2px;background:#d3d1cc"></div><div class="r" style="left:220px;top:444.6px;width:2.1px;height:206px;background:#8c8a2a"></div><div class="r" style="left:216.8px;top:646.5px;width:7.8px;height:7.8px;border-radius:50%;background:#8c8a2a"></div><div class="t" style="left:227.60px;top:356.84px;font-size:10px;color:#6b6a66;letter-spacing:0.589px;font-weight:bold;">Year</div><svg class="i" style="left:255px;top:358px;" width="6" height="9" viewBox="0 0 6 9"><path d="M1 0.8 L4.6 4.4 L1 8" fill="none" stroke="#77766f" stroke-width="0.9"/></svg><div class="r" style="left:412.4px;top:358.6px;width:2.2px;height:2.2px;background:#3d2d82;border-radius:50%"></div><div class="t" style="left:420.74px;top:356.84px;font-size:10px;color:#3d2d82;letter-spacing:0.506px;font-weight:bold;">Jul</div><div class="t" style="left:497.50px;top:356.84px;font-size:10px;color:#6b6a66;letter-spacing:0.680px;font-weight:bold;">Aug</div><div class="t" style="left:575.78px;top:356.84px;font-size:10px;color:#6b6a66;letter-spacing:0.642px;font-weight:bold;">Sep</div><div class="t" style="left:650.86px;top:356.84px;font-size:10px;color:#6b6a66;letter-spacing:0.583px;font-weight:bold;">Oct</div><div class="t" style="left:728.09px;top:356.84px;font-size:10px;color:#6b6a66;letter-spacing:0.661px;font-weight:bold;">Nov</div><div class="t" style="left:807.17px;top:356.84px;font-size:10px;color:#6b6a66;letter-spacing:0.642px;font-weight:bold;">Dec</div><div class="t" style="left:885.86px;top:356.84px;font-size:10px;color:#6b6a66;letter-spacing:0.603px;font-weight:bold;">Jan</div><div class="t" style="left:960.28px;top:356.84px;font-size:10px;color:#6b6a66;letter-spacing:0.622px;font-weight:bold;">Feb</div><div class="t" style="left:1040.27px;top:356.84px;font-size:10px;color:#6b6a66;letter-spacing:0.622px;font-weight:bold;">Mar</div><div class="t" style="left:1114.67px;top:356.84px;font-size:10px;color:#6b6a66;letter-spacing:0.603px;font-weight:bold;">Apr</div><div class="t" style="left:1198.18px;top:356.84px;font-size:10px;color:#6b6a66;letter-spacing:0.681px;font-weight:bold;">May</div><div class="t" style="left:1277.28px;top:356.84px;font-size:10px;color:#6b6a66;letter-spacing:0.622px;font-weight:bold;">Jun</div><div class="t" style="left:1366.30px;top:356.84px;font-size:10px;color:#6b6a66;letter-spacing:1.114px;font-weight:bold;">Total</div><div class="r" style="left:217px;top:379.0px;width:8.2px;height:7.4px;border-radius:50%;background:#3d2d82"></div><div class="t" style="left:227.90px;top:378.54px;font-size:10px;color:#6b6a66;letter-spacing:0.402px;font-weight:bold;">2022 - 2023</div><svg class="i" style="left:290px;top:379.1px;" width="6" height="9" viewBox="0 0 6 9"><path d="M1 0.8 L4.6 4.4 L1 8" fill="none" stroke="#77766f" stroke-width="0.9"/></svg><div class="t" style="left:424.30px;top:378.84px;font-size:10px;color:#3b3346;letter-spacing:0.779px;-webkit-text-stroke-width:0.10px;">48</div><div class="t" style="left:506.40px;top:378.84px;font-size:10px;color:#3b3346;letter-spacing:0.779px;-webkit-text-stroke-width:0.10px;">88</div><div class="t" style="left:578.34px;top:378.84px;font-size:10px;color:#3b3346;letter-spacing:0.558px;-webkit-text-stroke-width:0.10px;">117</div><div class="t" style="left:656.80px;top:378.84px;font-size:10px;color:#3b3346;letter-spacing:0.779px;-webkit-text-stroke-width:0.10px;">89</div><div class="t" style="left:736.40px;top:378.84px;font-size:10px;color:#3b3346;letter-spacing:0.779px;-webkit-text-stroke-width:0.10px;">45</div><div class="t" style="left:808.95px;top:378.84px;font-size:10px;color:#3b3346;letter-spacing:0.584px;-webkit-text-stroke-width:0.10px;">121</div><div class="t" style="left:886.45px;top:378.84px;font-size:10px;color:#3b3346;letter-spacing:0.584px;-webkit-text-stroke-width:0.10px;">188</div><div class="t" style="left:961.45px;top:378.84px;font-size:10px;color:#3b3346;letter-spacing:0.584px;-webkit-text-stroke-width:0.10px;">272</div><div class="t" style="left:1041.45px;top:378.84px;font-size:10px;color:#3b3346;letter-spacing:0.584px;-webkit-text-stroke-width:0.10px;">149</div><div class="t" style="left:1121.20px;top:378.84px;font-size:10px;color:#3b3346;letter-spacing:0.779px;-webkit-text-stroke-width:0.10px;">95</div><div class="t" style="left:1207.10px;top:378.84px;font-size:10px;color:#3b3346;letter-spacing:0.779px;-webkit-text-stroke-width:0.10px;">59</div><div class="t" style="left:1284.40px;top:378.84px;font-size:10px;color:#3b3346;letter-spacing:0.779px;-webkit-text-stroke-width:0.10px;">50</div><div class="t" style="left:1388.90px;top:378.84px;font-size:10px;color:#a9a7a2;-webkit-text-stroke-width:0.22px;">k</div><div class="t" style="left:1374.03px;top:378.84px;font-size:10px;color:#6b6a66;letter-spacing:0.487px;font-weight:bold;">1.3</div><div class="r" style="left:217px;top:400.8px;width:8.2px;height:7.4px;border-radius:50%;background:#3d2d82"></div><div class="t" style="left:227.90px;top:400.33px;font-size:10px;color:#6b6a66;letter-spacing:0.462px;font-weight:bold;">2023 - 2024</div><svg class="i" style="left:290px;top:400.9px;" width="6" height="9" viewBox="0 0 6 9"><path d="M1 0.8 L4.6 4.4 L1 8" fill="none" stroke="#77766f" stroke-width="0.9"/></svg><div class="t" style="left:424.30px;top:400.63px;font-size:10px;color:#3b3346;letter-spacing:0.779px;-webkit-text-stroke-width:0.10px;">41</div><div class="t" style="left:506.40px;top:400.63px;font-size:10px;color:#3b3346;letter-spacing:0.779px;-webkit-text-stroke-width:0.10px;">77</div><div class="t" style="left:577.55px;top:400.63px;font-size:10px;color:#3b3346;letter-spacing:0.584px;-webkit-text-stroke-width:0.10px;">103</div><div class="t" style="left:656.80px;top:400.63px;font-size:10px;color:#3b3346;letter-spacing:0.779px;-webkit-text-stroke-width:0.10px;">78</div><div class="t" style="left:736.40px;top:400.63px;font-size:10px;color:#3b3346;letter-spacing:0.779px;-webkit-text-stroke-width:0.10px;">40</div><div class="t" style="left:808.95px;top:400.63px;font-size:10px;color:#3b3346;letter-spacing:0.584px;-webkit-text-stroke-width:0.10px;">206</div><div class="t" style="left:886.45px;top:400.63px;font-size:10px;color:#3b3346;letter-spacing:0.584px;-webkit-text-stroke-width:0.10px;">329</div><div class="t" style="left:961.45px;top:400.63px;font-size:10px;color:#3b3346;letter-spacing:0.584px;-webkit-text-stroke-width:0.10px;">449</div><div class="t" style="left:1041.45px;top:400.63px;font-size:10px;color:#3b3346;letter-spacing:0.584px;-webkit-text-stroke-width:0.10px;">255</div><div class="t" style="left:1115.25px;top:400.63px;font-size:10px;color:#3b3346;letter-spacing:0.584px;-webkit-text-stroke-width:0.10px;">178</div><div class="t" style="left:1201.15px;top:400.63px;font-size:10px;color:#3b3346;letter-spacing:0.584px;-webkit-text-stroke-width:0.10px;">100</div><div class="t" style="left:1284.40px;top:400.63px;font-size:10px;color:#3b3346;letter-spacing:0.779px;-webkit-text-stroke-width:0.10px;">87</div><div class="t" style="left:1388.90px;top:400.63px;font-size:10px;color:#a9a7a2;-webkit-text-stroke-width:0.22px;">k</div><div class="t" style="left:1374.03px;top:400.63px;font-size:10px;color:#6b6a66;letter-spacing:0.487px;font-weight:bold;">1.9</div><svg class="i" style="left:1404.6px;top:403.29999999999995px;" width="6" height="5" viewBox="0 0 6 5"><path d="M0.3 4.6 L2.8 0.6 L5.3 4.6Z" fill="#13a06e"/></svg><div class="t" style="left:1414.70px;top:402.45px;font-size:7.5px;color:#8f8d88;letter-spacing:0.058px;-webkit-text-stroke-width:0.22px;">47.1%</div><div class="r" style="left:217px;top:423.0px;width:8.2px;height:7.4px;border-radius:50%;background:#3d2d82"></div><div class="t" style="left:227.90px;top:422.54px;font-size:10px;color:#6b6a66;letter-spacing:0.462px;font-weight:bold;">2024 - 2025</div><svg class="i" style="left:290px;top:423.1px;" width="6" height="9" viewBox="0 0 6 9"><path d="M1 0.8 L4.6 4.4 L1 8" fill="none" stroke="#77766f" stroke-width="0.9"/></svg><div class="t" style="left:418.35px;top:422.84px;font-size:10px;color:#3b3346;letter-spacing:0.584px;-webkit-text-stroke-width:0.10px;">105</div><div class="t" style="left:500.45px;top:422.84px;font-size:10px;color:#3b3346;letter-spacing:0.584px;-webkit-text-stroke-width:0.10px;">191</div><div class="t" style="left:577.55px;top:422.84px;font-size:10px;color:#3b3346;letter-spacing:0.584px;-webkit-text-stroke-width:0.10px;">239</div><div class="t" style="left:650.85px;top:422.84px;font-size:10px;color:#3b3346;letter-spacing:0.584px;-webkit-text-stroke-width:0.10px;">191</div><div class="t" style="left:730.45px;top:422.84px;font-size:10px;color:#3b3346;letter-spacing:0.584px;-webkit-text-stroke-width:0.10px;">101</div><div class="t" style="left:808.95px;top:422.84px;font-size:10px;color:#3b3346;letter-spacing:0.584px;-webkit-text-stroke-width:0.10px;">252</div><div class="t" style="left:886.45px;top:422.84px;font-size:10px;color:#3b3346;letter-spacing:0.584px;-webkit-text-stroke-width:0.10px;">453</div><div class="t" style="left:961.45px;top:422.84px;font-size:10px;color:#3b3346;letter-spacing:0.584px;-webkit-text-stroke-width:0.10px;">557</div><div class="t" style="left:1041.45px;top:422.84px;font-size:10px;color:#3b3346;letter-spacing:0.584px;-webkit-text-stroke-width:0.10px;">346</div><div class="t" style="left:1115.25px;top:422.84px;font-size:10px;color:#3b3346;letter-spacing:0.584px;-webkit-text-stroke-width:0.10px;">197</div><div class="t" style="left:1201.15px;top:422.84px;font-size:10px;color:#3b3346;letter-spacing:0.584px;-webkit-text-stroke-width:0.10px;">134</div><div class="t" style="left:1279.24px;top:422.84px;font-size:10px;color:#3b3346;letter-spacing:0.558px;-webkit-text-stroke-width:0.10px;">110</div><div class="t" style="left:1388.90px;top:422.84px;font-size:10px;color:#a9a7a2;-webkit-text-stroke-width:0.22px;">k</div><div class="t" style="left:1374.03px;top:422.84px;font-size:10px;color:#6b6a66;letter-spacing:0.487px;font-weight:bold;">2.9</div><svg class="i" style="left:1404.6px;top:425.5px;" width="6" height="5" viewBox="0 0 6 5"><path d="M0.3 4.6 L2.8 0.6 L5.3 4.6Z" fill="#13a06e"/></svg><div class="t" style="left:1414.70px;top:424.65px;font-size:7.5px;color:#8f8d88;letter-spacing:0.058px;-webkit-text-stroke-width:0.22px;">48.0%</div><svg class="i" style="left:228.5px;top:444.2px;" width="9" height="10" viewBox="0 0 9 10"><rect x="0.5" y="0.5" width="7.5" height="9" rx="0.8" fill="#3d2d82"/><rect x="1.8" y="1.6" width="5" height="2" fill="#fff"/><path d="M2 5.2H3M4 5.2H5M6 5.2H7M2 7H3M4 7H5M6 7H7M2 8.6H3M4 8.6H5M6 8.6H7" stroke="#fff" stroke-width="0.9"/></svg><div class="t" style="left:240.60px;top:444.21px;font-size:10.5px;color:#3d2d82;letter-spacing:0.585px;-webkit-text-stroke-width:0.22px;">Computer</div><div class="t" style="left:418.35px;top:444.94px;font-size:10px;color:#6b6a66;letter-spacing:0.584px;-webkit-text-stroke-width:0.10px;">250</div><div class="t" style="left:500.45px;top:444.94px;font-size:10px;color:#6b6a66;letter-spacing:0.584px;-webkit-text-stroke-width:0.10px;">200</div><div class="t" style="left:577.55px;top:444.94px;font-size:10px;color:#6b6a66;letter-spacing:0.584px;-webkit-text-stroke-width:0.10px;">250</div><div class="t" style="left:650.85px;top:444.94px;font-size:10px;color:#6b6a66;letter-spacing:0.584px;-webkit-text-stroke-width:0.10px;">190</div><div class="t" style="left:730.45px;top:444.94px;font-size:10px;color:#6b6a66;letter-spacing:0.584px;-webkit-text-stroke-width:0.10px;">230</div><div class="t" style="left:808.95px;top:444.94px;font-size:10px;color:#6b6a66;letter-spacing:0.584px;-webkit-text-stroke-width:0.10px;">300</div><div class="t" style="left:886.45px;top:444.94px;font-size:10px;color:#6b6a66;letter-spacing:0.584px;-webkit-text-stroke-width:0.10px;">150</div><div class="t" style="left:961.45px;top:444.94px;font-size:10px;color:#6b6a66;letter-spacing:0.584px;-webkit-text-stroke-width:0.10px;">129</div><div class="t" style="left:1041.45px;top:444.94px;font-size:10px;color:#6b6a66;letter-spacing:0.584px;-webkit-text-stroke-width:0.10px;">210</div><div class="t" style="left:1115.25px;top:444.94px;font-size:10px;color:#6b6a66;letter-spacing:0.584px;-webkit-text-stroke-width:0.10px;">170</div><div class="t" style="left:1201.15px;top:444.94px;font-size:10px;color:#6b6a66;letter-spacing:0.584px;-webkit-text-stroke-width:0.10px;">160</div><div class="t" style="left:1278.45px;top:444.94px;font-size:10px;color:#6b6a66;letter-spacing:0.584px;-webkit-text-stroke-width:0.10px;">153</div><div class="t" style="left:1388.90px;top:444.94px;font-size:10px;color:#a9a7a2;-webkit-text-stroke-width:0.22px;">k</div><div class="t" style="left:1374.03px;top:444.94px;font-size:10px;color:#6b6a66;letter-spacing:0.487px;-webkit-text-stroke-width:0.22px;">2.4</div><div class="t" style="left:227.60px;top:466.61px;font-size:10.5px;color:#6b6a66;letter-spacing:0.325px;-webkit-text-stroke-width:0.22px;">Promos</div><svg class="i" style="left:433.1px;top:461.9px" width="6" height="6"><path d="M0 0H5.6V5.8Z" fill="#c9c7c3"/></svg><svg class="i" style="left:515.2px;top:461.9px" width="6" height="6"><path d="M0 0H5.6V5.8Z" fill="#c9c7c3"/></svg><svg class="i" style="left:592.3px;top:461.9px" width="6" height="6"><path d="M0 0H5.6V5.8Z" fill="#c9c7c3"/></svg><svg class="i" style="left:665.6px;top:461.9px" width="6" height="6"><path d="M0 0H5.6V5.8Z" fill="#7b5cf0"/></svg><svg class="i" style="left:745.2px;top:461.9px" width="6" height="6"><path d="M0 0H5.6V5.8Z" fill="#c9c7c3"/></svg><svg class="i" style="left:823.7px;top:461.9px" width="6" height="6"><path d="M0 0H5.6V5.8Z" fill="#7b5cf0"/></svg><svg class="i" style="left:901.2px;top:461.9px" width="6" height="6"><path d="M0 0H5.6V5.8Z" fill="#c9c7c3"/></svg><svg class="i" style="left:976.2px;top:461.9px" width="6" height="6"><path d="M0 0H5.6V5.8Z" fill="#c9c7c3"/></svg><svg class="i" style="left:1056.2px;top:461.9px" width="6" height="6"><path d="M0 0H5.6V5.8Z" fill="#c9c7c3"/></svg><svg class="i" style="left:1130.0px;top:461.9px" width="6" height="6"><path d="M0 0H5.6V5.8Z" fill="#c9c7c3"/></svg><svg class="i" style="left:1215.9px;top:461.9px" width="6" height="6"><path d="M0 0H5.6V5.8Z" fill="#c9c7c3"/></svg><svg class="i" style="left:1293.2px;top:461.9px" width="6" height="6"><path d="M0 0H5.6V5.8Z" fill="#c9c7c3"/></svg><div class="t" style="left:1388.34px;top:467.83px;font-size:10px;color:#6b6a66;-webkit-text-stroke-width:0.22px;">0</div><div class="t" style="left:227.60px;top:488.61px;font-size:10.5px;color:#6b6a66;letter-spacing:0.512px;-webkit-text-stroke-width:0.22px;">Adjustments</div><svg class="i" style="left:433.1px;top:483.9px" width="6" height="6"><path d="M0 0H5.6V5.8Z" fill="#c9c7c3"/></svg><svg class="i" style="left:515.2px;top:483.9px" width="6" height="6"><path d="M0 0H5.6V5.8Z" fill="#c9c7c3"/></svg><svg class="i" style="left:592.3px;top:483.9px" width="6" height="6"><path d="M0 0H5.6V5.8Z" fill="#c9c7c3"/></svg><svg class="i" style="left:665.6px;top:483.9px" width="6" height="6"><path d="M0 0H5.6V5.8Z" fill="#7b5cf0"/></svg><div class="t" style="left:656.80px;top:489.83px;font-size:10px;color:#6b6a66;letter-spacing:0.779px;-webkit-text-stroke-width:0.10px;">26</div><svg class="i" style="left:745.2px;top:483.9px" width="6" height="6"><path d="M0 0H5.6V5.8Z" fill="#c9c7c3"/></svg><svg class="i" style="left:823.7px;top:483.9px" width="6" height="6"><path d="M0 0H5.6V5.8Z" fill="#c9c7c3"/></svg><svg class="i" style="left:901.2px;top:483.9px" width="6" height="6"><path d="M0 0H5.6V5.8Z" fill="#7b5cf0"/></svg><svg class="i" style="left:976.2px;top:483.9px" width="6" height="6"><path d="M0 0H5.6V5.8Z" fill="#c9c7c3"/></svg><svg class="i" style="left:1056.2px;top:483.9px" width="6" height="6"><path d="M0 0H5.6V5.8Z" fill="#7b5cf0"/></svg><div class="t" style="left:1047.40px;top:489.83px;font-size:10px;color:#6b6a66;letter-spacing:0.779px;-webkit-text-stroke-width:0.10px;">29</div><svg class="i" style="left:1130.0px;top:483.9px" width="6" height="6"><path d="M0 0H5.6V5.8Z" fill="#c9c7c3"/></svg><svg class="i" style="left:1215.9px;top:483.9px" width="6" height="6"><path d="M0 0H5.6V5.8Z" fill="#c9c7c3"/></svg><svg class="i" style="left:1293.2px;top:483.9px" width="6" height="6"><path d="M0 0H5.6V5.8Z" fill="#c9c7c3"/></svg><div class="t" style="left:1382.78px;top:489.83px;font-size:10px;color:#6b6a66;-webkit-text-stroke-width:0.22px;">55</div><div class="t" style="left:227.60px;top:511.51px;font-size:10.5px;color:#6b6a66;letter-spacing:0.261px;-webkit-text-stroke-width:0.22px;">Overrides</div><svg class="i" style="left:433.1px;top:506.8px" width="6" height="6"><path d="M0 0H5.6V5.8Z" fill="#c9c7c3"/></svg><div class="t" style="left:418.35px;top:512.73px;font-size:10px;color:#6b6a66;letter-spacing:0.584px;-webkit-text-stroke-width:0.10px;">139</div><svg class="i" style="left:515.2px;top:506.8px" width="6" height="6"><path d="M0 0H5.6V5.8Z" fill="#c9c7c3"/></svg><div class="t" style="left:500.45px;top:512.73px;font-size:10px;color:#6b6a66;letter-spacing:0.584px;-webkit-text-stroke-width:0.10px;">260</div><svg class="i" style="left:592.3px;top:506.8px" width="6" height="6"><path d="M0 0H5.6V5.8Z" fill="#c9c7c3"/></svg><div class="t" style="left:577.55px;top:512.73px;font-size:10px;color:#6b6a66;letter-spacing:0.584px;-webkit-text-stroke-width:0.10px;">362</div><svg class="i" style="left:665.6px;top:506.8px" width="6" height="6"><path d="M0 0H5.6V5.8Z" fill="#c9c7c3"/></svg><div class="t" style="left:650.85px;top:512.73px;font-size:10px;color:#6b6a66;letter-spacing:0.584px;-webkit-text-stroke-width:0.10px;">344</div><svg class="i" style="left:745.2px;top:506.8px" width="6" height="6"><path d="M0 0H5.6V5.8Z" fill="#c9c7c3"/></svg><div class="t" style="left:730.45px;top:512.73px;font-size:10px;color:#6b6a66;letter-spacing:0.584px;-webkit-text-stroke-width:0.10px;">132</div><svg class="i" style="left:823.7px;top:506.8px" width="6" height="6"><path d="M0 0H5.6V5.8Z" fill="#c9c7c3"/></svg><div class="t" style="left:808.95px;top:512.73px;font-size:10px;color:#6b6a66;letter-spacing:0.584px;-webkit-text-stroke-width:0.10px;">338</div><svg class="i" style="left:901.2px;top:506.8px" width="6" height="6"><path d="M0 0H5.6V5.8Z" fill="#c9c7c3"/></svg><div class="t" style="left:886.45px;top:512.73px;font-size:10px;color:#6b6a66;letter-spacing:0.584px;-webkit-text-stroke-width:0.10px;">662</div><svg class="i" style="left:976.2px;top:506.8px" width="6" height="6"><path d="M0 0H5.6V5.8Z" fill="#c9c7c3"/></svg><div class="t" style="left:961.45px;top:512.73px;font-size:10px;color:#6b6a66;letter-spacing:0.584px;-webkit-text-stroke-width:0.10px;">809</div><svg class="i" style="left:1056.2px;top:506.8px" width="6" height="6"><path d="M0 0H5.6V5.8Z" fill="#c9c7c3"/></svg><div class="t" style="left:1041.45px;top:512.73px;font-size:10px;color:#6b6a66;letter-spacing:0.584px;-webkit-text-stroke-width:0.10px;">475</div><svg class="i" style="left:1130.0px;top:506.8px" width="6" height="6"><path d="M0 0H5.6V5.8Z" fill="#c9c7c3"/></svg><div class="t" style="left:1115.25px;top:512.73px;font-size:10px;color:#6b6a66;letter-spacing:0.584px;-webkit-text-stroke-width:0.10px;">250</div><svg class="i" style="left:1215.9px;top:506.8px" width="6" height="6"><path d="M0 0H5.6V5.8Z" fill="#c9c7c3"/></svg><div class="t" style="left:1201.15px;top:512.73px;font-size:10px;color:#6b6a66;letter-spacing:0.584px;-webkit-text-stroke-width:0.10px;">171</div><svg class="i" style="left:1293.2px;top:506.8px" width="6" height="6"><path d="M0 0H5.6V5.8Z" fill="#c9c7c3"/></svg><div class="t" style="left:1278.45px;top:512.73px;font-size:10px;color:#6b6a66;letter-spacing:0.584px;-webkit-text-stroke-width:0.10px;">162</div><div class="t" style="left:1388.90px;top:512.73px;font-size:10px;color:#a9a7a2;-webkit-text-stroke-width:0.22px;">k</div><div class="t" style="left:1374.03px;top:512.73px;font-size:10px;color:#6b6a66;letter-spacing:0.487px;-webkit-text-stroke-width:0.22px;">4.1</div><svg class="i" style="left:227.4px;top:534.7px;" width="11" height="10" viewBox="0 0 11 10"><path d="M5.3 1.6 C4 0.8 2 0.6 0.6 1 V8.6 C2 8.2 4 8.4 5.3 9.2 C6.6 8.4 8.6 8.2 10 8.6 V1 C8.6 0.6 6.6 0.8 5.3 1.6Z M5.3 1.6V9.2" fill="none" stroke="#77766f" stroke-width="0.9"/></svg><div class="t" style="left:240.70px;top:534.81px;font-size:10.5px;color:#6b6a66;letter-spacing:-0.326px;-webkit-text-stroke-width:0.22px;">Sales FC</div><svg class="i" style="left:433.1px;top:530.1px" width="6" height="6"><path d="M0 0H5.6V5.8Z" fill="#7b5cf0"/></svg><div class="t" style="left:430.25px;top:536.03px;font-size:10px;color:#6b6a66;-webkit-text-stroke-width:0.10px;">1</div><svg class="i" style="left:515.2px;top:530.1px" width="6" height="6"><path d="M0 0H5.6V5.8Z" fill="#7b5cf0"/></svg><div class="t" style="left:512.35px;top:536.03px;font-size:10px;color:#6b6a66;-webkit-text-stroke-width:0.10px;">1</div><svg class="i" style="left:592.3px;top:530.1px" width="6" height="6"><path d="M0 0H5.6V5.8Z" fill="#7b5cf0"/></svg><div class="t" style="left:589.45px;top:536.03px;font-size:10px;color:#6b6a66;-webkit-text-stroke-width:0.10px;">1</div><svg class="i" style="left:665.6px;top:530.1px" width="6" height="6"><path d="M0 0H5.6V5.8Z" fill="#7b5cf0"/></svg><div class="t" style="left:662.75px;top:536.03px;font-size:10px;color:#6b6a66;-webkit-text-stroke-width:0.10px;">6</div><svg class="i" style="left:745.2px;top:530.1px" width="6" height="6"><path d="M0 0H5.6V5.8Z" fill="#7b5cf0"/></svg><div class="t" style="left:742.35px;top:536.03px;font-size:10px;color:#6b6a66;-webkit-text-stroke-width:0.10px;">3</div><svg class="i" style="left:823.7px;top:530.1px" width="6" height="6"><path d="M0 0H5.6V5.8Z" fill="#7b5cf0"/></svg><div class="t" style="left:820.85px;top:536.03px;font-size:10px;color:#6b6a66;-webkit-text-stroke-width:0.10px;">3</div><svg class="i" style="left:901.2px;top:530.1px" width="6" height="6"><path d="M0 0H5.6V5.8Z" fill="#7b5cf0"/></svg><div class="t" style="left:898.35px;top:536.03px;font-size:10px;color:#6b6a66;-webkit-text-stroke-width:0.10px;">3</div><svg class="i" style="left:976.2px;top:530.1px" width="6" height="6"><path d="M0 0H5.6V5.8Z" fill="#7b5cf0"/></svg><div class="t" style="left:973.35px;top:536.03px;font-size:10px;color:#6b6a66;-webkit-text-stroke-width:0.10px;">1</div><svg class="i" style="left:1056.2px;top:530.1px" width="6" height="6"><path d="M0 0H5.6V5.8Z" fill="#7b5cf0"/></svg><div class="t" style="left:1053.35px;top:536.03px;font-size:10px;color:#6b6a66;-webkit-text-stroke-width:0.10px;">1</div><svg class="i" style="left:1130.0px;top:530.1px" width="6" height="6"><path d="M0 0H5.6V5.8Z" fill="#7b5cf0"/></svg><div class="t" style="left:1127.15px;top:536.03px;font-size:10px;color:#6b6a66;-webkit-text-stroke-width:0.10px;">1</div><svg class="i" style="left:1215.9px;top:530.1px" width="6" height="6"><path d="M0 0H5.6V5.8Z" fill="#7b5cf0"/></svg><svg class="i" style="left:1293.2px;top:530.1px" width="6" height="6"><path d="M0 0H5.6V5.8Z" fill="#7b5cf0"/></svg><div class="t" style="left:1290.35px;top:536.03px;font-size:10px;color:#6b6a66;-webkit-text-stroke-width:0.10px;">4</div><div class="t" style="left:1382.78px;top:536.03px;font-size:10px;color:#6b6a66;-webkit-text-stroke-width:0.22px;">25</div><svg class="i" style="left:227.4px;top:557.6px;" width="11" height="10" viewBox="0 0 11 10"><path d="M5.3 1.6 C4 0.8 2 0.6 0.6 1 V8.6 C2 8.2 4 8.4 5.3 9.2 C6.6 8.4 8.6 8.2 10 8.6 V1 C8.6 0.6 6.6 0.8 5.3 1.6Z M5.3 1.6V9.2" fill="none" stroke="#77766f" stroke-width="0.9"/></svg><div class="t" style="left:240.70px;top:557.71px;font-size:10.5px;color:#6b6a66;letter-spacing:0.404px;-webkit-text-stroke-width:0.22px;">Budget</div><svg class="i" style="left:433.1px;top:553.0px" width="6" height="6"><path d="M0 0H5.6V5.8Z" fill="#7b5cf0"/></svg><div class="t" style="left:424.30px;top:558.93px;font-size:10px;color:#6b6a66;letter-spacing:0.779px;-webkit-text-stroke-width:0.10px;">21</div><svg class="i" style="left:515.2px;top:553.0px" width="6" height="6"><path d="M0 0H5.6V5.8Z" fill="#7b5cf0"/></svg><div class="t" style="left:506.40px;top:558.93px;font-size:10px;color:#6b6a66;letter-spacing:0.779px;-webkit-text-stroke-width:0.10px;">40</div><svg class="i" style="left:592.3px;top:553.0px" width="6" height="6"><path d="M0 0H5.6V5.8Z" fill="#7b5cf0"/></svg><div class="t" style="left:583.50px;top:558.93px;font-size:10px;color:#6b6a66;letter-spacing:0.779px;-webkit-text-stroke-width:0.10px;">67</div><svg class="i" style="left:665.6px;top:553.0px" width="6" height="6"><path d="M0 0H5.6V5.8Z" fill="#7b5cf0"/></svg><div class="t" style="left:656.80px;top:558.93px;font-size:10px;color:#6b6a66;letter-spacing:0.779px;-webkit-text-stroke-width:0.10px;">88</div><svg class="i" style="left:745.2px;top:553.0px" width="6" height="6"><path d="M0 0H5.6V5.8Z" fill="#7b5cf0"/></svg><div class="t" style="left:730.45px;top:558.93px;font-size:10px;color:#6b6a66;letter-spacing:0.584px;-webkit-text-stroke-width:0.10px;">168</div><svg class="i" style="left:823.7px;top:553.0px" width="6" height="6"><path d="M0 0H5.6V5.8Z" fill="#7b5cf0"/></svg><div class="t" style="left:808.95px;top:558.93px;font-size:10px;color:#6b6a66;letter-spacing:0.584px;-webkit-text-stroke-width:0.10px;">272</div><svg class="i" style="left:901.2px;top:553.0px" width="6" height="6"><path d="M0 0H5.6V5.8Z" fill="#7b5cf0"/></svg><div class="t" style="left:886.45px;top:558.93px;font-size:10px;color:#6b6a66;letter-spacing:0.584px;-webkit-text-stroke-width:0.10px;">165</div><svg class="i" style="left:976.2px;top:553.0px" width="6" height="6"><path d="M0 0H5.6V5.8Z" fill="#7b5cf0"/></svg><div class="t" style="left:961.45px;top:558.93px;font-size:10px;color:#6b6a66;letter-spacing:0.584px;-webkit-text-stroke-width:0.10px;">164</div><svg class="i" style="left:1056.2px;top:553.0px" width="6" height="6"><path d="M0 0H5.6V5.8Z" fill="#7b5cf0"/></svg><div class="t" style="left:1041.45px;top:558.93px;font-size:10px;color:#6b6a66;letter-spacing:0.584px;-webkit-text-stroke-width:0.10px;">215</div><svg class="i" style="left:1130.0px;top:553.0px" width="6" height="6"><path d="M0 0H5.6V5.8Z" fill="#7b5cf0"/></svg><div class="t" style="left:1115.25px;top:558.93px;font-size:10px;color:#6b6a66;letter-spacing:0.584px;-webkit-text-stroke-width:0.10px;">288</div><svg class="i" style="left:1215.9px;top:553.0px" width="6" height="6"><path d="M0 0H5.6V5.8Z" fill="#7b5cf0"/></svg><div class="t" style="left:1201.15px;top:558.93px;font-size:10px;color:#6b6a66;letter-spacing:0.584px;-webkit-text-stroke-width:0.10px;">440</div><svg class="i" style="left:1293.2px;top:553.0px" width="6" height="6"><path d="M0 0H5.6V5.8Z" fill="#7b5cf0"/></svg><div class="t" style="left:1278.45px;top:558.93px;font-size:10px;color:#6b6a66;letter-spacing:0.584px;-webkit-text-stroke-width:0.10px;">335</div><div class="t" style="left:1388.90px;top:558.93px;font-size:10px;color:#a9a7a2;-webkit-text-stroke-width:0.22px;">k</div><div class="t" style="left:1374.03px;top:558.93px;font-size:10px;color:#6b6a66;letter-spacing:0.487px;-webkit-text-stroke-width:0.22px;">2.3</div><svg class="i" style="left:227.4px;top:580.6px;" width="11" height="10" viewBox="0 0 11 10"><path d="M5.3 1.6 C4 0.8 2 0.6 0.6 1 V8.6 C2 8.2 4 8.4 5.3 9.2 C6.6 8.4 8.6 8.2 10 8.6 V1 C8.6 0.6 6.6 0.8 5.3 1.6Z M5.3 1.6V9.2" fill="none" stroke="#77766f" stroke-width="0.9"/></svg><div class="t" style="left:240.70px;top:580.71px;font-size:10.5px;color:#6b6a66;letter-spacing:0.114px;-webkit-text-stroke-width:0.22px;">Cust. O/H</div><svg class="i" style="left:433.1px;top:576.0px" width="6" height="6"><path d="M0 0H5.6V5.8Z" fill="#c9c7c3"/></svg><svg class="i" style="left:515.2px;top:576.0px" width="6" height="6"><path d="M0 0H5.6V5.8Z" fill="#c9c7c3"/></svg><svg class="i" style="left:592.3px;top:576.0px" width="6" height="6"><path d="M0 0H5.6V5.8Z" fill="#7b5cf0"/></svg><svg class="i" style="left:665.6px;top:576.0px" width="6" height="6"><path d="M0 0H5.6V5.8Z" fill="#7b5cf0"/></svg><svg class="i" style="left:745.2px;top:576.0px" width="6" height="6"><path d="M0 0H5.6V5.8Z" fill="#7b5cf0"/></svg><svg class="i" style="left:823.7px;top:576.0px" width="6" height="6"><path d="M0 0H5.6V5.8Z" fill="#7b5cf0"/></svg><svg class="i" style="left:901.2px;top:576.0px" width="6" height="6"><path d="M0 0H5.6V5.8Z" fill="#7b5cf0"/></svg><svg class="i" style="left:976.2px;top:576.0px" width="6" height="6"><path d="M0 0H5.6V5.8Z" fill="#7b5cf0"/></svg><svg class="i" style="left:1056.2px;top:576.0px" width="6" height="6"><path d="M0 0H5.6V5.8Z" fill="#7b5cf0"/></svg><svg class="i" style="left:1130.0px;top:576.0px" width="6" height="6"><path d="M0 0H5.6V5.8Z" fill="#7b5cf0"/></svg><svg class="i" style="left:1215.9px;top:576.0px" width="6" height="6"><path d="M0 0H5.6V5.8Z" fill="#7b5cf0"/></svg><svg class="i" style="left:1293.2px;top:576.0px" width="6" height="6"><path d="M0 0H5.6V5.8Z" fill="#7b5cf0"/></svg><div class="t" style="left:1388.34px;top:581.93px;font-size:10px;color:#6b6a66;-webkit-text-stroke-width:0.22px;">0</div><svg class="i" style="left:227.4px;top:602.7px;" width="11" height="10" viewBox="0 0 11 10"><path d="M5.3 1.6 C4 0.8 2 0.6 0.6 1 V8.6 C2 8.2 4 8.4 5.3 9.2 C6.6 8.4 8.6 8.2 10 8.6 V1 C8.6 0.6 6.6 0.8 5.3 1.6Z M5.3 1.6V9.2" fill="none" stroke="#77766f" stroke-width="0.9"/></svg><div class="t" style="left:240.70px;top:602.81px;font-size:10.5px;color:#6b6a66;letter-spacing:0.777px;-webkit-text-stroke-width:0.22px;">Campaign</div><svg class="i" style="left:433.1px;top:598.1px" width="6" height="6"><path d="M0 0H5.6V5.8Z" fill="#c9c7c3"/></svg><svg class="i" style="left:515.2px;top:598.1px" width="6" height="6"><path d="M0 0H5.6V5.8Z" fill="#c9c7c3"/></svg><svg class="i" style="left:592.3px;top:598.1px" width="6" height="6"><path d="M0 0H5.6V5.8Z" fill="#c9c7c3"/></svg><svg class="i" style="left:665.6px;top:598.1px" width="6" height="6"><path d="M0 0H5.6V5.8Z" fill="#c9c7c3"/></svg><svg class="i" style="left:745.2px;top:598.1px" width="6" height="6"><path d="M0 0H5.6V5.8Z" fill="#c9c7c3"/></svg><svg class="i" style="left:823.7px;top:598.1px" width="6" height="6"><path d="M0 0H5.6V5.8Z" fill="#c9c7c3"/></svg><svg class="i" style="left:901.2px;top:598.1px" width="6" height="6"><path d="M0 0H5.6V5.8Z" fill="#c9c7c3"/></svg><svg class="i" style="left:976.2px;top:598.1px" width="6" height="6"><path d="M0 0H5.6V5.8Z" fill="#c9c7c3"/></svg><svg class="i" style="left:1056.2px;top:598.1px" width="6" height="6"><path d="M0 0H5.6V5.8Z" fill="#c9c7c3"/></svg><svg class="i" style="left:1130.0px;top:598.1px" width="6" height="6"><path d="M0 0H5.6V5.8Z" fill="#c9c7c3"/></svg><svg class="i" style="left:1215.9px;top:598.1px" width="6" height="6"><path d="M0 0H5.6V5.8Z" fill="#c9c7c3"/></svg><svg class="i" style="left:1293.2px;top:598.1px" width="6" height="6"><path d="M0 0H5.6V5.8Z" fill="#c9c7c3"/></svg><div class="t" style="left:1388.34px;top:604.03px;font-size:10px;color:#6b6a66;-webkit-text-stroke-width:0.22px;">0</div><svg class="i" style="left:227px;top:624.1px;" width="12" height="11" viewBox="0 0 12 11"><path d="M5.6 0.8 L7 4 L10.6 4.3 L7.9 6.6 L8.7 10 L5.6 8.2 L2.5 10 L3.3 6.6 L0.6 4.3 L4.2 4Z" fill="none" stroke="#1f9d6e" stroke-width="0.9"/></svg><div class="t" style="left:240.70px;top:624.71px;font-size:10.5px;color:#6b6a66;-webkit-text-stroke-width:0.22px;">Working FC</div><div class="t" style="left:418.35px;top:624.83px;font-size:10px;color:#1f9d6e;letter-spacing:0.584px;-webkit-text-stroke-width:0.10px;">139</div><div class="t" style="left:500.45px;top:624.83px;font-size:10px;color:#1f9d6e;letter-spacing:0.584px;-webkit-text-stroke-width:0.10px;">260</div><div class="t" style="left:577.55px;top:624.83px;font-size:10px;color:#1f9d6e;letter-spacing:0.584px;-webkit-text-stroke-width:0.10px;">362</div><div class="t" style="left:650.85px;top:624.83px;font-size:10px;color:#1f9d6e;letter-spacing:0.584px;-webkit-text-stroke-width:0.10px;">344</div><div class="t" style="left:730.45px;top:624.83px;font-size:10px;color:#1f9d6e;letter-spacing:0.584px;-webkit-text-stroke-width:0.10px;">132</div><div class="t" style="left:808.95px;top:624.83px;font-size:10px;color:#1f9d6e;letter-spacing:0.584px;-webkit-text-stroke-width:0.10px;">338</div><div class="t" style="left:886.45px;top:624.83px;font-size:10px;color:#1f9d6e;letter-spacing:0.584px;-webkit-text-stroke-width:0.10px;">662</div><div class="t" style="left:961.45px;top:624.83px;font-size:10px;color:#1f9d6e;letter-spacing:0.584px;-webkit-text-stroke-width:0.10px;">809</div><div class="t" style="left:1041.45px;top:624.83px;font-size:10px;color:#1f9d6e;letter-spacing:0.584px;-webkit-text-stroke-width:0.10px;">475</div><div class="t" style="left:1115.25px;top:624.83px;font-size:10px;color:#1f9d6e;letter-spacing:0.584px;-webkit-text-stroke-width:0.10px;">250</div><div class="t" style="left:1201.15px;top:624.83px;font-size:10px;color:#1f9d6e;letter-spacing:0.584px;-webkit-text-stroke-width:0.10px;">171</div><div class="t" style="left:1278.45px;top:624.83px;font-size:10px;color:#1f9d6e;letter-spacing:0.584px;-webkit-text-stroke-width:0.10px;">162</div><div class="t" style="left:1388.90px;top:624.83px;font-size:10px;color:#a9a7a2;-webkit-text-stroke-width:0.22px;">k</div><div class="t" style="left:1374.03px;top:624.83px;font-size:10px;color:#6b6a66;letter-spacing:0.487px;-webkit-text-stroke-width:0.22px;">4.1</div><svg class="i" style="left:1404.6px;top:627.5px;" width="6" height="5" viewBox="0 0 6 5"><path d="M0.3 4.6 L2.8 0.6 L5.3 4.6Z" fill="#13a06e"/></svg><div class="t" style="left:1414.70px;top:626.65px;font-size:7.5px;color:#8f8d88;letter-spacing:0.058px;-webkit-text-stroke-width:0.22px;">42.7%</div><div class="t" style="left:227.90px;top:646.63px;font-size:10px;color:#6b6a66;letter-spacing:0.532px;font-weight:bold;">2025 - 2026</div><svg class="i" style="left:290px;top:648.7px;" width="9" height="6" viewBox="0 0 9 6"><path d="M0.8 4.8 L4.4 1.2 L8 4.8" fill="none" stroke="#77766f" stroke-width="0.9"/></svg><div class="t" style="left:418.35px;top:646.93px;font-size:10px;color:#3b3346;letter-spacing:0.584px;-webkit-text-stroke-width:0.10px;">139</div><div class="t" style="left:500.45px;top:646.93px;font-size:10px;color:#3b3346;letter-spacing:0.584px;-webkit-text-stroke-width:0.10px;">260</div><div class="t" style="left:577.55px;top:646.93px;font-size:10px;color:#3b3346;letter-spacing:0.584px;-webkit-text-stroke-width:0.10px;">362</div><div class="t" style="left:650.85px;top:646.93px;font-size:10px;color:#3b3346;letter-spacing:0.584px;-webkit-text-stroke-width:0.10px;">344</div><div class="t" style="left:730.45px;top:646.93px;font-size:10px;color:#3b3346;letter-spacing:0.584px;-webkit-text-stroke-width:0.10px;">132</div><div class="t" style="left:808.95px;top:646.93px;font-size:10px;color:#3b3346;letter-spacing:0.584px;-webkit-text-stroke-width:0.10px;">338</div><div class="t" style="left:886.45px;top:646.93px;font-size:10px;color:#3b3346;letter-spacing:0.584px;-webkit-text-stroke-width:0.10px;">662</div><div class="t" style="left:961.45px;top:646.93px;font-size:10px;color:#3b3346;letter-spacing:0.584px;-webkit-text-stroke-width:0.10px;">809</div><div class="t" style="left:1041.45px;top:646.93px;font-size:10px;color:#3b3346;letter-spacing:0.584px;-webkit-text-stroke-width:0.10px;">475</div><div class="t" style="left:1115.25px;top:646.93px;font-size:10px;color:#3b3346;letter-spacing:0.584px;-webkit-text-stroke-width:0.10px;">250</div><div class="t" style="left:1201.15px;top:646.93px;font-size:10px;color:#3b3346;letter-spacing:0.584px;-webkit-text-stroke-width:0.10px;">171</div><div class="t" style="left:1278.45px;top:646.93px;font-size:10px;color:#3b3346;letter-spacing:0.584px;-webkit-text-stroke-width:0.10px;">162</div><div class="t" style="left:317.60px;top:646.93px;font-size:10px;color:#3b3346;-webkit-text-stroke-width:0.10px;">138</div><div class="t" style="left:1388.90px;top:646.93px;font-size:10px;color:#a9a7a2;-webkit-text-stroke-width:0.22px;">k</div><div class="t" style="left:1374.03px;top:646.93px;font-size:10px;color:#6b6a66;letter-spacing:0.487px;font-weight:bold;">4.1</div><svg class="i" style="left:1404.6px;top:649.6px;" width="6" height="5" viewBox="0 0 6 5"><path d="M0.3 4.6 L2.8 0.6 L5.3 4.6Z" fill="#13a06e"/></svg><div class="t" style="left:1414.70px;top:648.75px;font-size:7.5px;color:#8f8d88;letter-spacing:0.058px;-webkit-text-stroke-width:0.22px;">42.7%</div><div class="card" style="left:1490px;top:291px;width:407px;height:197.4px"></div><svg class="i" style="left:1505.5px;top:304px;" width="10" height="9" viewBox="0 0 10 9"><path d="M0.5 8.5H2V6.5H0.5ZM3.5 8.5H5V4H3.5ZM6.5 8.5H8V0.5H6.5Z" fill="none" stroke="#77766f" stroke-width="0.9"/></svg><div class="t" style="left:1517.90px;top:303.29px;font-size:11px;color:#62615c;letter-spacing:0.311px;-webkit-text-stroke-width:0.12px;">Comparison</div><div class="t" style="left:1513.55px;top:345.53px;font-size:8px;color:#9a9893;-webkit-text-stroke-width:0.22px;">6k</div><div class="t" style="left:1513.55px;top:381.13px;font-size:8px;color:#9a9893;-webkit-text-stroke-width:0.22px;">4k</div><div class="t" style="left:1513.55px;top:416.03px;font-size:8px;color:#9a9893;-webkit-text-stroke-width:0.22px;">2k</div><div class="t" style="left:1517.55px;top:451.53px;font-size:8px;color:#9a9893;-webkit-text-stroke-width:0.22px;">0</div><svg class="i" style="left:0;top:0" width="1901" height="500" viewBox="0 0 1901 500"><path d="M1532.7 349.4H1866.7" stroke="#ebe9e5" stroke-width="1.1"/><path d="M1532.7 385H1866.7" stroke="#ebe9e5" stroke-width="1.1"/><path d="M1532.7 419.9H1866.7" stroke="#ebe9e5" stroke-width="1.1"/><path d="M1532.7 455.4H1866.7" stroke="#ebe9e5" stroke-width="1.1"/><path d="M1540 455.4V433.3Q1540 431.8 1541.5 431.8H1608.3Q1609.8 431.8 1609.8 433.3V455.4Z" fill="#3d2d82"/><path d="M1623.9 455.4V422.5Q1623.9 421 1625.4 421H1691.3Q1692.8 421 1692.8 422.5V455.4Z" fill="#3d2d82"/><path d="M1707.1 455.4V406.3Q1707.1 404.8 1708.6 404.8H1774.6Q1776.1 404.8 1776.1 406.3V455.4Z" fill="#3d2d82"/><path d="M1790.2 455.4V384.4Q1790.2 382.9 1791.7 382.9H1857.9Q1859.4 382.9 1859.4 384.4V455.4Z" fill="#8c8a2a"/><path d="M1803.1 455.4V385.0Q1803.1 383.5 1804.6 383.5H1843.5Q1845 383.5 1845 385.0V455.4Z" fill="#0a7040"/></svg><div class="t" style="left:1563.95px;top:468.03px;font-size:8px;color:#9a9893;letter-spacing:0.510px;-webkit-text-stroke-width:0.22px;">22-23</div><div class="t" style="left:1647.15px;top:468.03px;font-size:8px;color:#9a9893;letter-spacing:0.510px;-webkit-text-stroke-width:0.22px;">23-24</div><div class="t" style="left:1730.35px;top:468.03px;font-size:8px;color:#9a9893;letter-spacing:0.510px;-webkit-text-stroke-width:0.22px;">24-25</div><div class="t" style="left:1813.55px;top:468.03px;font-size:8px;color:#9a9893;letter-spacing:0.510px;-webkit-text-stroke-width:0.22px;">25-26</div><div class="card" style="left:1490px;top:500.7px;width:407px;height:286.6px;overflow:hidden"><div style="position:absolute;left:0;top:0;width:100%;height:25.3px;background:#dbdad6"></div><div style="position:absolute;left:0;top:0;width:101px;height:25.3px;background:#fff"></div><div style="position:absolute;left:0;top:23.7px;width:101px;height:1.6px;background:#3d2d82"></div></div><svg class="i" style="left:1504px;top:507px;" width="7" height="10" viewBox="0 0 7 10"><path d="M1 1 L5.5 4.5 L1 8Z" fill="none" stroke="#6b6a66" stroke-width="0.9"/></svg><div class="t" style="left:1514.70px;top:507.41px;font-size:10.5px;color:#55544f;letter-spacing:0.414px;-webkit-text-stroke-width:0.22px;">Top Location</div><svg class="i" style="left:1603px;top:508px;" width="10" height="8" viewBox="0 0 10 8"><path d="M1 1 H8.5 L4.75 6.5Z" fill="none" stroke="#77766f" stroke-width="0.9"/></svg><div class="t" style="left:1615.80px;top:507.41px;font-size:10.5px;color:#77766f;letter-spacing:0.453px;-webkit-text-stroke-width:0.22px;">Top Classification</div><div class="t" style="left:1505.50px;top:543.31px;font-size:10.5px;color:#75746f;letter-spacing:0.448px;-webkit-text-stroke-width:0.10px;">Imported history</div><svg class="i" style="left:1664.5px;top:541.5px;" width="11" height="11" viewBox="0 0 11 11"><rect x="0.5" y="1" width="9.5" height="9" fill="none" stroke="#6b6a66" stroke-width="0.9"/><path d="M0.5 3.4H10M5 5.6H8M2.5 0V2M8 0V2" stroke="#6b6a66" stroke-width="0.9"/></svg><div class="t" style="left:1677.30px;top:543.31px;font-size:10.5px;color:#55544f;letter-spacing:0.220px;-webkit-text-stroke-width:0.22px;">Jul 2024 - Jun 2025</div><div class="r btn" style="left:1851.6px;top:540.3px;width:30.9px;height:23.4px"></div><svg class="i" style="left:1861px;top:546px;" width="12" height="12" viewBox="0 0 12 12"><path d="M8 1.2 L10.6 3.8 L4 10.4 L1.2 10.9 L1.7 8.1Z M6.8 2.4 L9.4 5" fill="none" stroke="#55544f" stroke-width="0.9"/></svg><div class="t" style="left:1505.30px;top:577.63px;font-size:10px;color:#3d2d82;letter-spacing:-0.199px;-webkit-text-stroke-width:0.05px;">RICHMOND</div><div class="r" style="left:1505.3px;top:593.0px;width:376.4px;height:8.8px;border-radius:4.4px;background:#eeece8"></div><div class="r" style="left:1505.3px;top:593.0px;width:29.7px;height:8.8px;border-radius:4.4px 0 0 4.4px;background:#3d2d82"></div><div class="t" style="left:1863.47px;top:581.13px;font-size:8px;color:#a9a7a2;-webkit-text-stroke-width:0.22px;">7.4%</div><div class="t" style="left:1855.97px;top:579.43px;font-size:10px;color:#a9a7a2;-webkit-text-stroke-width:0.22px;">k</div><div class="t" style="left:1836.50px;top:579.43px;font-size:10px;color:#6b6a66;-webkit-text-stroke-width:0.22px;">58.9</div><div class="t" style="left:1505.30px;top:610.84px;font-size:10px;color:#3d2d82;letter-spacing:-0.446px;-webkit-text-stroke-width:0.05px;">DURBAN</div><div class="r" style="left:1505.3px;top:626.2px;width:376.4px;height:8.8px;border-radius:4.4px;background:#eeece8"></div><div class="r" style="left:1505.3px;top:626.2px;width:14.7px;height:8.8px;border-radius:4.4px 0 0 4.4px;background:#3d2d82"></div><div class="t" style="left:1863.47px;top:614.33px;font-size:8px;color:#a9a7a2;-webkit-text-stroke-width:0.22px;">3.6%</div><div class="t" style="left:1855.97px;top:612.63px;font-size:10px;color:#a9a7a2;-webkit-text-stroke-width:0.22px;">k</div><div class="t" style="left:1836.50px;top:612.63px;font-size:10px;color:#6b6a66;-webkit-text-stroke-width:0.22px;">28.6</div><div class="t" style="left:1505.30px;top:643.93px;font-size:10px;color:#3d2d82;letter-spacing:-0.339px;-webkit-text-stroke-width:0.05px;">MARINA</div><div class="r" style="left:1505.3px;top:659.3px;width:376.4px;height:8.8px;border-radius:4.4px;background:#eeece8"></div><div class="r" style="left:1505.3px;top:659.3px;width:10.5px;height:8.8px;border-radius:4.4px 0 0 4.4px;background:#3d2d82"></div><div class="t" style="left:1863.47px;top:647.43px;font-size:8px;color:#a9a7a2;-webkit-text-stroke-width:0.22px;">2.7%</div><div class="t" style="left:1855.97px;top:645.73px;font-size:10px;color:#a9a7a2;-webkit-text-stroke-width:0.22px;">k</div><div class="t" style="left:1836.50px;top:645.73px;font-size:10px;color:#6b6a66;-webkit-text-stroke-width:0.22px;">21.7</div><div class="t" style="left:1505.30px;top:676.93px;font-size:10px;color:#3d2d82;letter-spacing:-0.525px;-webkit-text-stroke-width:0.05px;">KNYSNA</div><div class="r" style="left:1505.3px;top:692.3px;width:376.4px;height:8.8px;border-radius:4.4px;background:#eeece8"></div><div class="r" style="left:1505.3px;top:692.3px;width:5.7px;height:8.8px;border-radius:4.4px 0 0 4.4px;background:#3d2d82"></div><div class="t" style="left:1863.47px;top:680.43px;font-size:8px;color:#a9a7a2;-webkit-text-stroke-width:0.22px;">1.4%</div><div class="t" style="left:1855.97px;top:678.73px;font-size:10px;color:#a9a7a2;-webkit-text-stroke-width:0.22px;">k</div><div class="t" style="left:1837.24px;top:678.73px;font-size:10px;color:#6b6a66;-webkit-text-stroke-width:0.22px;">11.3</div><div class="t" style="left:1505.30px;top:709.93px;font-size:10px;color:#3d2d82;letter-spacing:-0.777px;-webkit-text-stroke-width:0.05px;">PRETORIA</div><div class="r" style="left:1505.3px;top:725.3px;width:376.4px;height:8.8px;border-radius:4.4px;background:#eeece8"></div><div class="r" style="left:1505.3px;top:725.3px;width:5.7px;height:8.8px;border-radius:4.4px 0 0 4.4px;background:#3d2d82"></div><div class="t" style="left:1863.47px;top:713.43px;font-size:8px;color:#a9a7a2;-webkit-text-stroke-width:0.22px;">1.4%</div><div class="t" style="left:1855.97px;top:711.73px;font-size:10px;color:#a9a7a2;-webkit-text-stroke-width:0.22px;">k</div><div class="t" style="left:1836.50px;top:711.73px;font-size:10px;color:#6b6a66;-webkit-text-stroke-width:0.22px;">10.7</div><div class="t" style="left:1505.30px;top:742.93px;font-size:10px;color:#6b6a66;letter-spacing:0.672px;-webkit-text-stroke-width:0.05px;">Other</div><div class="r" style="left:1505.3px;top:758.3px;width:376.4px;height:8.8px;border-radius:4.4px;background:#eeece8"></div><div class="r" style="left:1505.3px;top:758.3px;width:338.7px;height:8.8px;border-radius:4.4px 0 0 4.4px;background:#6b6a66"></div><div class="t" style="left:1859.02px;top:746.43px;font-size:8px;color:#a9a7a2;-webkit-text-stroke-width:0.22px;">83.4%</div><div class="t" style="left:1851.52px;top:744.73px;font-size:10px;color:#a9a7a2;-webkit-text-stroke-width:0.22px;">k</div><div class="t" style="left:1826.49px;top:744.73px;font-size:10px;color:#6b6a66;-webkit-text-stroke-width:0.22px;">660.2</div>
</body></html>
